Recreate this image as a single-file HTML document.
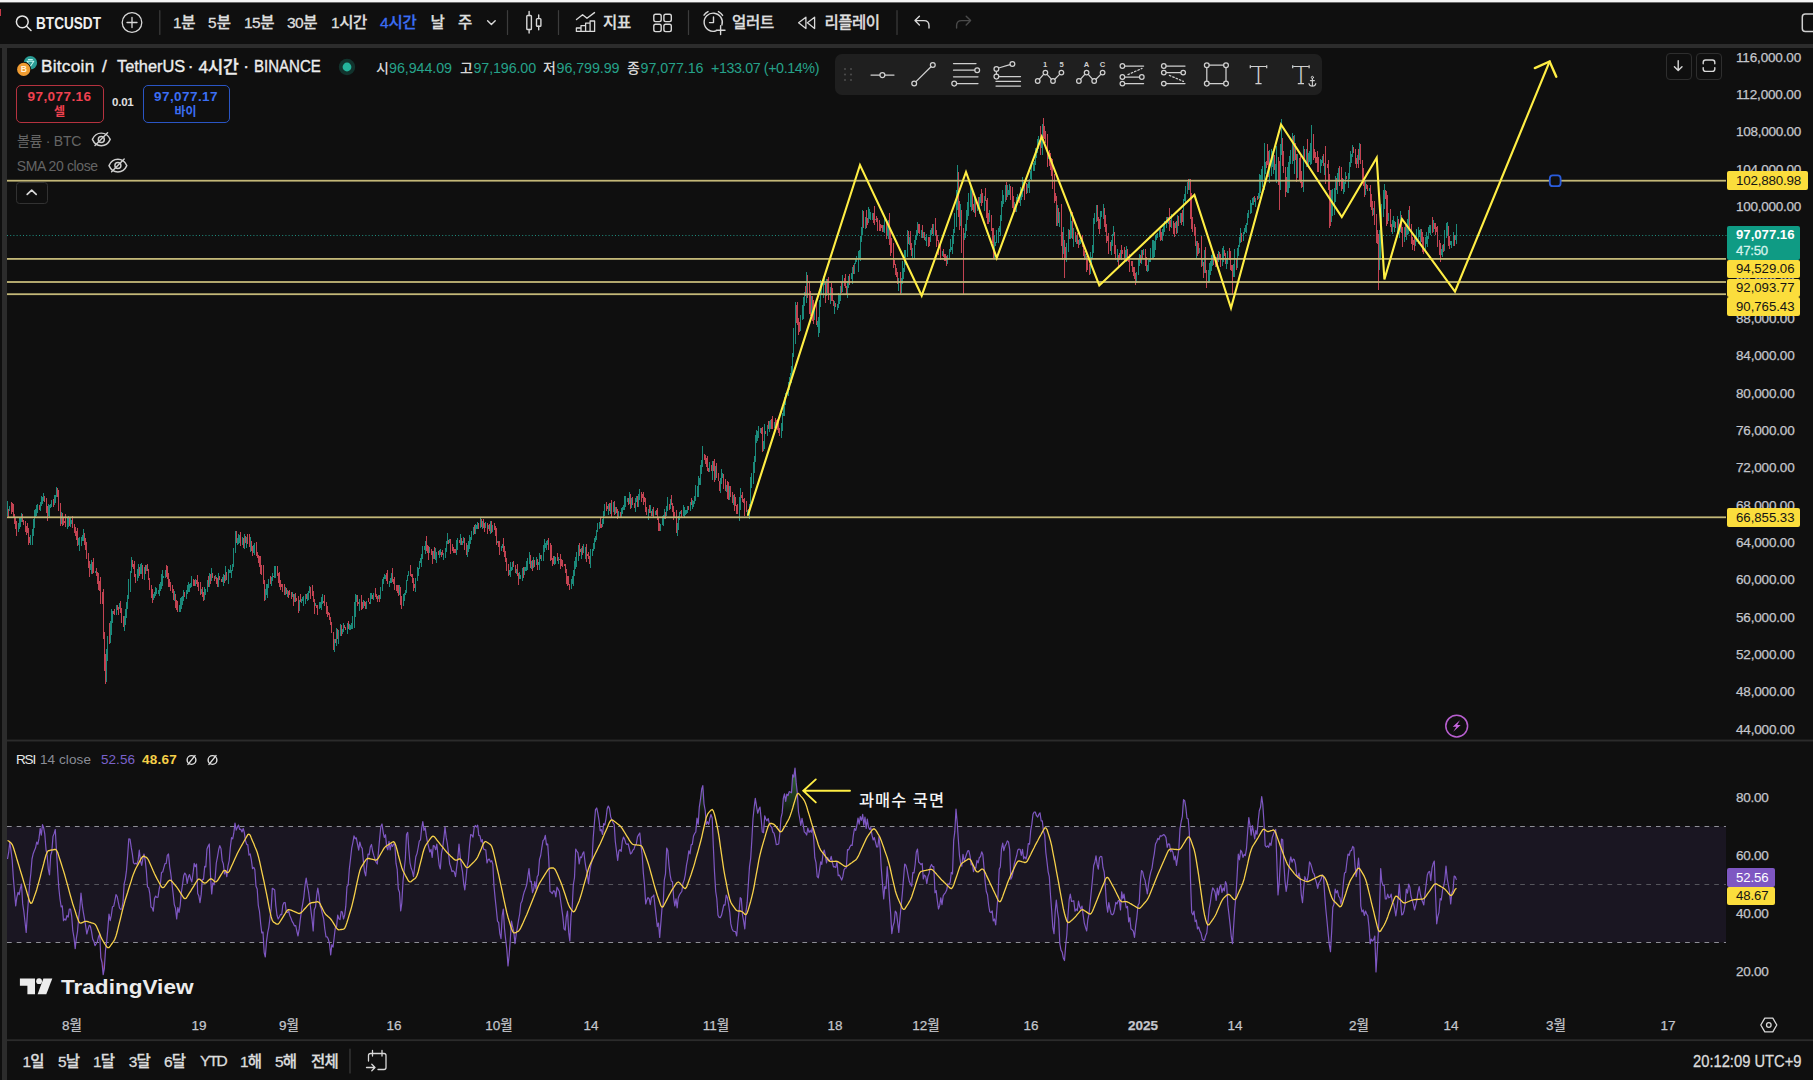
<!DOCTYPE html>
<html lang="ko"><head><meta charset="utf-8"><title>BTCUSDT 4시간 차트</title>
<style>
html,body{margin:0;padding:0;background:#0f0f0f}
body{width:1813px;height:1080px;overflow:hidden;position:relative;font-family:"Liberation Sans","Noto Sans CJK KR",sans-serif}
.t{position:absolute;white-space:nowrap;line-height:1;}
.lab{position:absolute;border-radius:2px}
.abs{position:absolute}
</style></head><body>
<div class="abs" style="left:0;top:0;width:1813px;height:2px;background:#f4f4f4"></div>
<div class="abs" style="left:0;top:2px;width:1813px;height:1px;background:#6b6b6b"></div>
<div class="abs" style="left:0;top:44px;width:1813px;height:4px;background:#2c2c2c"></div>
<div class="abs" style="left:2px;top:48px;width:5px;height:1032px;background:#2c2c2c"></div>
<div class="abs" style="left:0;top:9px;width:1px;height:7px;background:#c43a48"></div>
<div class="abs" style="left:7px;top:48px;width:1806px;height:1032px;background:#0f0f0f;border-top-left-radius:5px"></div>
<div class="abs" style="left:835px;top:53.5px;width:486.5px;height:41.5px;background:#1f1f1f;border-radius:7px"></div>
<div class="abs" style="left:15.5px;top:85px;width:86px;height:35.5px;border:1.3px solid #b5323f;border-radius:5px"></div>
<div class="abs" style="left:142.5px;top:85px;width:85px;height:35.5px;border:1.3px solid #2a55c4;border-radius:5px"></div>
<div class="abs" style="left:16.3px;top:181.9px;width:30px;height:20px;border:1.2px solid #323232;border-radius:3.5px"></div>
<div class="abs" style="left:1665.5px;top:53px;width:24.5px;height:24.5px;border:1px solid #2e2e2e;border-radius:4px"></div>
<div class="abs" style="left:1696px;top:53px;width:24px;height:24.5px;border:1px solid #2e2e2e;border-radius:4px"></div>
<svg id="chart" width="1813" height="1080" viewBox="0 0 1813 1080" style="position:absolute;left:0;top:0">
<defs><linearGradient id="obg" x1="0" y1="766" x2="0" y2="826.5" gradientUnits="userSpaceOnUse"><stop offset="0" stop-color="#4caf50" stop-opacity=".7"/><stop offset=".45" stop-color="#4caf50" stop-opacity=".28"/><stop offset=".75" stop-color="#4caf50" stop-opacity=".06"/><stop offset="1" stop-color="#4caf50" stop-opacity="0"/></linearGradient><linearGradient id="osg" x1="0" y1="942" x2="0" y2="977" gradientUnits="userSpaceOnUse"><stop offset="0" stop-color="#f23645" stop-opacity="0"/><stop offset=".55" stop-color="#f23645" stop-opacity=".12"/><stop offset=".8" stop-color="#f23645" stop-opacity=".6"/><stop offset="1" stop-color="#f23645" stop-opacity=".95"/></linearGradient></defs>
<rect x="7" y="739.6" width="1806" height="1.9" fill="#2b2b2b"/>
<rect x="7" y="1039.3" width="1806" height="1.8" fill="#2b2b2b"/>
<path d="M7 235.5H1727" stroke="#1f8f80" stroke-width="1" stroke-dasharray="1 2.2" fill="none"/>
<g fill="none" stroke-width="1" shape-rendering="crispEdges">
<path d="M7.5 500.8V515.8M9.5 506.3V511.2M18.5 522.8V531.7M19.5 517.2V528.9M20.5 518.3V527.3M21.5 512.7V522.3M30.5 534.5V545.1M32.5 529.2V544.5M33.5 519.2V535.6M34.5 510.4V527.8M35.5 508.8V516.9M36.5 505.4V515.9M37.5 503.5V513.0M40.5 501.6V511.4M41.5 496.4V506.2M42.5 496.5V504.1M43.5 492.5V500.9M48.5 504.3V516.2M49.5 505.3V517.9M50.5 504.3V508.1M51.5 499.9V507.0M54.5 495.2V505.1M55.5 494.8V502.9M56.5 487.0V497.2M61.5 511.9V524.0M67.5 517.9V529.4M68.5 515.6V526.9M70.5 517.2V527.2M71.5 519.6V523.8M78.5 537.5V544.7M79.5 537.3V550.8M81.5 537.1V546.0M82.5 535.1V541.4M83.5 529.3V540.8M90.5 563.5V570.2M91.5 560.0V573.7M95.5 570.5V572.7M106.5 649.0V682.3M107.5 635.6V661.3M110.5 621.1V643.3M111.5 608.5V635.4M112.5 610.7V622.6M116.5 604.8V614.8M119.5 603.4V609.3M124.5 615.6V631.3M125.5 608.9V625.0M126.5 601.7V617.5M127.5 595.2V608.7M128.5 578.6V599.3M130.5 570.5V591.9M131.5 557.0V572.6M137.5 569.2V581.0M138.5 563.8V578.3M140.5 564.4V574.0M141.5 563.4V573.5M144.5 566.8V580.2M146.5 565.2V571.4M153.5 593.8V600.2M154.5 592.2V597.8M155.5 586.6V596.0M156.5 587.9V594.3M158.5 590.1V594.2M159.5 583.5V595.6M160.5 582.4V591.2M161.5 573.6V588.6M162.5 569.9V585.7M163.5 576.4V578.4M165.5 569.9V577.8M174.5 591.0V600.9M179.5 604.7V611.6M180.5 598.4V611.9M181.5 596.6V608.9M182.5 596.1V605.1M183.5 589.8V600.6M186.5 589.8V599.0M187.5 585.2V593.6M188.5 582.0V592.1M189.5 583.8V591.6M190.5 582.5V588.3M191.5 576.1V587.2M195.5 579.4V586.0M201.5 589.2V593.7M204.5 586.7V600.4M205.5 588.8V595.4M207.5 579.9V592.3M209.5 572.7V586.6M211.5 568.4V580.7M215.5 575.2V579.4M218.5 572.7V586.7M222.5 577.1V582.0M223.5 574.3V586.2M225.5 566.0V581.1M228.5 568.5V583.6M229.5 570.4V573.1M230.5 564.9V572.7M231.5 570.2V578.2M232.5 563.9V571.4M233.5 547.5V566.8M235.5 531.3V553.0M237.5 538.2V544.6M238.5 534.3V543.8M239.5 535.1V542.5M242.5 537.0V545.1M244.5 533.7V549.2M246.5 536.6V548.0M250.5 537.0V551.7M253.5 544.6V552.8M254.5 542.6V554.9M265.5 588.6V599.8M266.5 583.6V595.0M267.5 584.2V597.6M268.5 579.4V587.5M271.5 577.2V586.2M272.5 572.9V580.9M274.5 565.7V577.9M275.5 565.9V578.0M285.5 587.0V595.4M287.5 590.3V596.8M292.5 592.4V597.0M294.5 593.9V601.7M299.5 599.5V610.7M301.5 599.3V602.8M302.5 596.9V601.4M303.5 596.1V606.2M305.5 593.9V604.3M307.5 592.7V600.8M308.5 590.5V600.4M309.5 585.5V593.0M315.5 603.3V606.3M319.5 601.6V609.2M320.5 602.1V607.6M321.5 596.7V609.7M322.5 594.0V604.4M334.5 638.7V652.0M336.5 627.7V646.3M338.5 630.2V643.7M340.5 624.3V636.0M342.5 629.2V634.3M343.5 622.8V631.6M347.5 622.7V633.6M349.5 624.0V630.1M350.5 624.5V629.5M351.5 622.9V629.0M352.5 616.4V629.0M354.5 602.1V627.6M355.5 594.0V616.8M356.5 594.5V602.1M359.5 599.4V611.4M363.5 599.6V607.7M366.5 600.8V609.1M370.5 593.2V603.7M371.5 592.9V599.4M373.5 593.3V599.5M378.5 594.6V598.7M380.5 586.7V599.4M382.5 578.7V590.9M383.5 577.2V583.8M384.5 573.6V578.8M385.5 575.0V578.8M389.5 580.5V586.5M390.5 577.7V582.6M391.5 572.8V582.9M399.5 585.1V595.3M403.5 593.6V606.3M404.5 593.3V601.1M405.5 589.8V595.3M406.5 579.6V592.9M407.5 575.2V580.5M408.5 570.6V575.8M415.5 577.7V592.0M417.5 566.8V581.3M418.5 568.0V575.8M419.5 560.8V568.9M420.5 558.0V562.8M421.5 554.4V566.5M422.5 545.9V558.7M424.5 545.5V550.2M425.5 541.0V553.9M429.5 546.5V553.4M433.5 550.9V558.5M435.5 547.7V560.0M436.5 552.0V562.5M439.5 549.7V557.8M440.5 549.4V555.3M443.5 552.6V559.9M445.5 547.6V558.0M446.5 541.4V551.9M447.5 533.1V544.4M449.5 539.0V543.2M456.5 540.3V554.5M457.5 537.8V550.2M460.5 534.2V544.5M462.5 540.5V544.5M463.5 537.2V542.7M467.5 545.1V557.4M468.5 541.2V551.6M469.5 534.5V548.5M470.5 537.3V543.9M471.5 531.2V539.6M473.5 526.5V535.0M475.5 523.9V534.1M476.5 524.5V529.4M477.5 522.2V529.2M480.5 517.2V528.2M482.5 520.9V528.7M485.5 522.1V528.3M488.5 525.1V529.4M490.5 521.1V533.5M492.5 524.8V531.8M497.5 540.6V543.2M501.5 546.4V551.0M502.5 543.6V548.2M509.5 570.1V574.8M510.5 562.4V576.5M511.5 567.0V571.0M512.5 561.7V570.2M516.5 568.5V574.2M519.5 571.5V579.0M520.5 574.7V579.4M522.5 568.1V580.6M524.5 566.6V574.6M525.5 567.2V571.4M526.5 560.9V571.0M527.5 557.8V570.0M529.5 551.9V564.0M531.5 560.7V569.2M533.5 556.9V568.3M536.5 556.9V565.3M538.5 561.6V565.0M539.5 552.7V570.2M541.5 555.3V561.3M543.5 545.2V560.6M544.5 538.6V552.1M545.5 542.8V548.3M546.5 541.2V550.1M547.5 539.8V544.8M554.5 555.7V564.8M555.5 557.4V564.2M558.5 556.5V564.3M571.5 579.3V589.1M572.5 575.5V584.1M573.5 569.8V585.8M574.5 560.8V575.6M575.5 556.9V569.4M576.5 552.4V566.5M578.5 545.2V561.4M581.5 547.9V559.1M583.5 543.6V553.1M585.5 547.0V559.2M590.5 548.7V567.5M592.5 548.8V556.3M593.5 543.1V551.1M594.5 538.4V548.7M595.5 536.0V542.2M596.5 529.8V540.4M597.5 522.6V531.8M599.5 521.9V528.8M602.5 518.9V526.9M603.5 511.0V523.9M604.5 504.3V515.7M608.5 503.5V515.2M610.5 502.9V513.7M613.5 501.8V512.0M615.5 507.1V514.4M618.5 511.3V517.1M621.5 507.5V516.8M622.5 507.2V514.4M623.5 505.0V509.6M624.5 496.4V510.0M625.5 496.3V506.7M627.5 497.9V501.7M629.5 492.1V504.1M631.5 497.8V507.6M635.5 498.4V511.5M636.5 495.7V502.0M638.5 493.9V507.3M639.5 489.3V500.0M648.5 509.4V520.3M650.5 504.5V513.1M652.5 508.6V515.9M655.5 511.0V515.4M660.5 524.3V531.2M662.5 516.4V524.7M663.5 515.1V525.9M664.5 508.6V519.2M666.5 505.9V515.5M667.5 497.2V510.6M670.5 498.6V508.9M677.5 522.8V536.2M678.5 515.7V530.4M679.5 511.6V519.7M680.5 510.6V513.8M683.5 505.1V516.3M684.5 507.0V517.9M685.5 509.7V515.1M686.5 509.6V514.4M687.5 506.4V512.8M690.5 502.2V510.8M692.5 499.9V509.0M693.5 500.5V506.5M694.5 495.7V503.5M695.5 485.4V500.6M697.5 485.7V497.4M698.5 475.6V496.7M699.5 477.9V485.3M700.5 465.4V485.0M701.5 460.4V473.6M702.5 446.2V467.4M709.5 462.3V471.6M712.5 461.0V479.5M715.5 466.1V479.7M720.5 478.2V492.9M721.5 468.5V484.4M722.5 473.3V477.8M726.5 484.6V492.0M729.5 485.9V499.8M733.5 494.5V505.2M739.5 496.5V520.6M740.5 488.1V510.4M747.5 509.7V514.3M749.5 503.7V518.8M750.5 477.1V505.4M751.5 472.9V487.7M753.5 461.7V484.3M754.5 456.0V472.8M755.5 435.0V461.9M756.5 430.2V443.0M757.5 430.9V441.2M758.5 426.4V437.7M760.5 427.9V433.1M763.5 441.2V450.9M764.5 423.9V448.8M767.5 425.3V435.9M769.5 420.7V432.0M770.5 420.0V428.5M774.5 422.3V428.4M781.5 422.5V437.7M782.5 412.6V431.1M783.5 407.0V416.3M784.5 397.1V416.2M785.5 392.6V404.9M786.5 391.5V394.1M788.5 382.1V396.1M789.5 377.0V389.6M790.5 373.4V382.1M791.5 366.2V383.0M792.5 353.1V374.2M793.5 328.4V356.7M795.5 302.1V343.9M800.5 314.7V331.4M802.5 304.6V319.7M803.5 296.6V318.5M804.5 292.0V306.3M806.5 272.0V303.0M811.5 295.8V316.7M814.5 309.3V320.1M817.5 320.6V327.2M818.5 316.5V337.1M819.5 299.5V333.0M820.5 279.5V306.9M821.5 286.0V295.0M823.5 275.5V297.6M824.5 273.5V285.4M826.5 279.2V295.7M830.5 287.2V304.0M834.5 300.9V313.9M837.5 304.2V309.8M838.5 293.2V307.5M839.5 294.1V304.3M840.5 285.9V301.3M842.5 275.2V291.7M847.5 280.5V297.6M848.5 275.7V288.1M851.5 273.4V279.0M852.5 267.4V283.7M854.5 262.6V273.5M855.5 258.0V264.2M856.5 255.5V262.0M858.5 251.4V271.5M859.5 250.4V259.3M860.5 236.2V260.8M861.5 226.5V242.4M862.5 210.0V234.7M865.5 216.8V228.5M868.5 206.9V222.6M869.5 209.1V218.5M870.5 211.6V220.3M872.5 213.3V219.6M875.5 218.7V220.4M883.5 224.5V231.9M884.5 217.9V233.0M887.5 221.6V234.6M888.5 220.1V239.3M898.5 277.5V291.1M901.5 278.1V292.8M902.5 261.0V283.7M903.5 268.0V278.8M904.5 249.7V271.5M905.5 249.9V264.5M907.5 230.1V257.4M909.5 237.2V244.6M912.5 248.2V258.6M914.5 240.2V259.2M915.5 234.8V245.1M916.5 230.4V240.1M917.5 222.3V236.4M921.5 230.3V238.2M923.5 232.1V238.0M925.5 236.9V241.4M926.5 233.5V245.8M930.5 230.2V242.4M931.5 228.0V235.0M933.5 224.0V235.7M939.5 246.3V248.2M942.5 250.7V255.9M947.5 255.2V263.8M949.5 248.7V257.9M950.5 239.1V251.9M951.5 246.5V250.0M952.5 235.2V253.5M953.5 228.8V243.9M954.5 212.8V232.8M956.5 190.4V226.6M957.5 164.6V209.7M960.5 204.1V226.2M964.5 233.0V239.5M965.5 224.4V237.6M966.5 210.1V231.3M967.5 202.3V219.6M968.5 193.2V215.9M970.5 184.8V207.4M971.5 187.9V210.6M974.5 194.8V212.9M977.5 202.8V210.8M979.5 197.2V213.6M980.5 194.4V203.2M984.5 196.1V211.2M989.5 210.3V221.9M994.5 234.9V257.9M995.5 242.1V246.0M996.5 230.0V242.8M998.5 228.1V242.8M999.5 225.7V231.6M1000.5 215.1V236.2M1001.5 200.9V220.5M1002.5 190.4V207.2M1003.5 194.9V203.8M1005.5 185.0V202.4M1007.5 184.6V197.2M1008.5 190.4V195.1M1009.5 183.8V194.6M1014.5 202.4V212.1M1016.5 197.2V211.5M1017.5 194.3V199.4M1020.5 187.1V206.4M1021.5 189.6V199.5M1022.5 177.4V197.2M1023.5 181.8V191.4M1027.5 184.3V192.8M1028.5 182.4V188.1M1029.5 178.5V193.2M1030.5 171.0V178.8M1031.5 162.7V181.2M1033.5 162.8V170.7M1034.5 161.3V170.5M1035.5 148.4V165.2M1036.5 148.5V157.6M1037.5 138.7V153.4M1038.5 135.8V148.6M1041.5 139.6V148.2M1042.5 124.2V155.3M1048.5 154.1V159.2M1057.5 205.3V226.3M1059.5 211.5V227.1M1063.5 227.2V254.3M1066.5 242.7V261.7M1068.5 229.3V252.0M1070.5 213.3V238.8M1071.5 220.9V237.7M1073.5 227.8V246.5M1076.5 234.8V243.6M1079.5 238.7V245.0M1080.5 240.4V244.1M1085.5 254.3V259.1M1090.5 252.2V273.7M1091.5 256.7V263.5M1092.5 245.1V258.8M1093.5 217.8V253.2M1094.5 212.5V223.8M1096.5 204.9V221.8M1100.5 211.0V229.1M1101.5 211.4V216.7M1103.5 204.0V219.2M1111.5 239.8V255.1M1112.5 233.6V246.0M1113.5 225.9V235.5M1117.5 248.7V261.9M1120.5 250.4V258.4M1125.5 249.7V259.2M1126.5 245.5V261.6M1136.5 271.6V283.2M1138.5 258.4V275.3M1139.5 253.6V265.6M1141.5 249.8V264.4M1143.5 249.3V254.5M1147.5 265.2V272.2M1148.5 259.9V270.7M1149.5 258.0V262.3M1150.5 247.9V261.8M1152.5 240.2V259.0M1153.5 240.2V258.1M1154.5 241.1V256.5M1155.5 235.0V249.5M1156.5 234.3V239.6M1157.5 233.2V237.5M1159.5 229.5V237.1M1162.5 229.3V241.1M1163.5 223.6V236.0M1164.5 221.1V232.0M1166.5 216.7V227.6M1168.5 217.3V223.9M1171.5 213.7V227.6M1175.5 222.1V228.0M1177.5 214.9V233.0M1180.5 212.7V223.4M1183.5 198.6V226.4M1184.5 193.9V200.6M1185.5 186.0V203.8M1187.5 182.3V193.5M1189.5 179.0V190.4M1196.5 241.3V257.8M1199.5 248.0V252.5M1202.5 259.0V265.5M1204.5 249.8V273.1M1208.5 270.4V283.1M1209.5 263.0V282.4M1210.5 260.8V275.1M1211.5 255.4V270.9M1212.5 252.9V265.7M1216.5 257.2V266.8M1218.5 251.2V262.0M1222.5 247.5V266.3M1223.5 245.5V261.7M1226.5 257.8V268.7M1227.5 251.3V263.8M1233.5 264.4V276.6M1234.5 248.7V277.0M1237.5 248.1V268.4M1238.5 245.4V256.3M1239.5 236.9V247.2M1240.5 227.9V242.5M1243.5 231.7V241.0M1244.5 227.7V234.3M1245.5 224.5V231.5M1246.5 222.5V233.4M1247.5 212.7V224.7M1248.5 210.2V218.0M1250.5 199.6V213.5M1251.5 203.4V212.5M1252.5 197.5V205.4M1253.5 196.5V205.0M1255.5 197.8V206.5M1258.5 193.3V199.1M1259.5 173.8V198.1M1260.5 175.0V192.9M1261.5 168.9V182.4M1262.5 166.1V186.6M1264.5 142.8V190.2M1265.5 161.9V174.1M1269.5 150.1V182.8M1271.5 148.8V176.4M1272.5 151.1V166.6M1273.5 153.8V174.1M1275.5 164.0V180.5M1276.5 145.9V182.9M1280.5 143.8V189.6M1281.5 119.0V155.2M1287.5 167.0V192.5M1288.5 161.6V192.9M1289.5 155.9V187.9M1290.5 149.7V164.0M1292.5 132.6V164.1M1294.5 135.4V174.4M1297.5 154.2V178.2M1303.5 146.0V191.5M1306.5 148.6V167.4M1308.5 153.4V168.0M1309.5 151.1V162.2M1310.5 142.5V164.7M1311.5 124.5V163.5M1320.5 158.9V172.6M1321.5 159.9V166.1M1322.5 156.0V163.1M1324.5 163.3V175.0M1331.5 190.4V221.9M1332.5 188.7V215.6M1334.5 187.6V214.5M1335.5 175.8V201.7M1337.5 173.0V194.4M1338.5 168.2V181.8M1343.5 179.0V194.1M1344.5 181.5V191.6M1345.5 172.4V184.3M1348.5 172.7V188.4M1349.5 162.2V179.4M1350.5 151.2V166.8M1351.5 153.6V163.4M1352.5 145.2V157.0M1357.5 155.3V163.5M1359.5 142.7V160.4M1365.5 181.3V194.8M1369.5 187.9V191.4M1373.5 207.8V214.8M1379.5 229.8V269.7M1380.5 224.6V260.3M1381.5 203.7V232.6M1383.5 190.1V217.2M1384.5 183.7V209.0M1388.5 213.1V221.0M1392.5 220.2V233.9M1393.5 215.8V226.5M1394.5 220.5V231.5M1397.5 216.1V235.4M1399.5 224.3V238.4M1400.5 210.9V232.4M1404.5 226.5V242.0M1406.5 224.6V239.8M1407.5 218.9V235.2M1408.5 210.0V234.0M1415.5 235.9V246.4M1416.5 229.3V242.0M1418.5 226.8V243.5M1419.5 230.0V236.5M1420.5 229.4V245.0M1425.5 237.4V250.6M1426.5 232.4V243.5M1427.5 236.3V246.8M1428.5 227.2V238.7M1429.5 225.3V233.4M1430.5 224.6V235.1M1433.5 219.8V231.6M1441.5 248.9V255.3M1442.5 245.2V257.0M1444.5 229.8V250.5M1446.5 223.4V238.1M1447.5 222.0V234.7M1450.5 240.9V244.5M1451.5 240.8V247.6M1453.5 231.5V246.1M1455.5 234.6V240.4M1456.5 224.3V244.4" stroke="#1b8a7b"/>
<path d="M8.5 508.9V516.6M11.5 502.4V513.8M12.5 503.1V512.4M13.5 503.6V517.2M14.5 513.8V524.0M15.5 518.0V529.2M16.5 521.1V535.6M22.5 513.9V521.6M23.5 520.3V525.2M25.5 521.3V532.3M26.5 525.7V534.6M27.5 522.8V533.0M28.5 528.1V544.7M29.5 536.9V543.1M39.5 504.7V510.4M44.5 495.8V501.8M46.5 498.2V513.4M47.5 505.8V521.1M53.5 498.7V506.5M57.5 487.7V496.5M58.5 490.0V510.7M60.5 502.9V525.9M62.5 513.3V526.2M63.5 517.1V524.5M64.5 520.5V523.4M65.5 513.9V526.7M69.5 517.0V525.9M72.5 515.8V528.2M74.5 523.9V532.9M75.5 527.0V536.4M76.5 530.6V539.9M77.5 527.8V546.4M84.5 533.4V545.3M85.5 538.0V550.0M86.5 542.3V559.3M88.5 553.3V567.7M89.5 561.3V576.5M92.5 561.6V573.6M93.5 558.2V572.9M96.5 567.7V576.2M97.5 571.8V583.5M98.5 572.6V589.8M99.5 581.4V590.8M100.5 576.6V603.6M102.5 591.6V604.0M103.5 588.6V639.1M104.5 632.1V671.1M105.5 653.5V684.0M109.5 622.9V643.9M113.5 610.7V613.7M114.5 608.9V614.5M117.5 605.1V610.4M118.5 607.2V614.7M120.5 600.8V613.4M121.5 608.0V622.8M123.5 615.8V626.6M132.5 560.0V566.8M133.5 563.8V568.6M134.5 561.2V576.6M135.5 573.5V582.6M139.5 566.6V576.2M142.5 565.0V579.1M145.5 565.0V574.1M147.5 564.1V570.7M148.5 569.3V580.2M149.5 577.6V589.7M151.5 584.9V598.3M152.5 589.2V602.6M166.5 565.3V576.8M167.5 566.3V579.3M168.5 573.1V587.0M169.5 579.4V586.5M170.5 581.6V591.3M172.5 584.8V593.3M173.5 589.1V599.7M175.5 594.3V607.9M176.5 600.0V610.0M177.5 600.8V611.7M184.5 592.0V596.9M193.5 578.5V586.0M194.5 580.2V585.7M196.5 580.2V583.5M197.5 574.6V587.4M198.5 582.3V591.2M200.5 582.3V595.2M202.5 586.6V597.3M203.5 592.0V601.3M208.5 575.8V586.5M210.5 574.4V584.0M212.5 572.8V578.2M214.5 575.8V580.6M216.5 576.8V584.3M217.5 578.3V587.3M219.5 575.5V580.3M221.5 579.2V582.3M224.5 574.7V582.6M226.5 571.7V580.0M236.5 530.5V542.5M240.5 531.8V546.0M243.5 538.3V547.9M245.5 536.0V543.0M247.5 534.0V543.5M249.5 534.2V547.0M251.5 540.6V550.5M252.5 545.7V556.0M256.5 541.8V555.6M257.5 551.5V558.4M258.5 555.3V562.5M259.5 555.5V566.5M260.5 555.8V573.8M261.5 564.8V575.0M263.5 564.9V583.6M264.5 579.5V600.5M270.5 575.6V584.2M273.5 575.9V577.0M277.5 566.3V576.2M278.5 573.1V583.2M279.5 572.1V586.6M280.5 580.1V589.9M281.5 584.2V586.9M282.5 583.7V592.1M284.5 584.3V594.8M286.5 588.1V593.8M288.5 591.1V597.5M289.5 590.0V594.9M291.5 592.3V599.1M293.5 594.3V606.4M295.5 593.1V602.1M296.5 598.3V600.7M298.5 596.1V612.7M300.5 594.1V602.1M306.5 594.3V598.9M310.5 587.2V598.5M312.5 585.2V596.4M313.5 591.3V601.8M314.5 599.0V613.6M316.5 604.7V608.1M317.5 604.5V615.2M323.5 600.8V602.6M324.5 594.8V606.0M326.5 601.8V614.2M327.5 605.6V617.0M328.5 612.4V615.0M329.5 613.1V619.6M330.5 617.1V624.5M331.5 622.4V633.2M333.5 632.4V650.0M335.5 639.2V642.8M337.5 629.3V639.3M341.5 624.8V635.6M344.5 625.1V628.2M345.5 626.7V630.1M348.5 621.4V628.8M357.5 595.1V605.7M358.5 602.3V604.1M361.5 594.5V609.7M362.5 602.1V609.2M364.5 600.6V606.0M365.5 602.4V608.6M368.5 597.7V602.0M369.5 601.6V604.4M372.5 595.2V598.6M375.5 588.4V596.6M376.5 593.6V598.5M377.5 596.3V601.8M379.5 594.9V602.0M386.5 573.0V580.8M387.5 570.2V583.5M392.5 568.3V582.2M393.5 578.9V584.3M394.5 577.0V589.7M396.5 585.0V590.5M397.5 584.7V593.0M398.5 584.5V595.8M400.5 586.6V604.6M401.5 595.8V609.1M410.5 565.1V575.7M411.5 573.7V576.9M412.5 573.7V583.4M413.5 577.7V590.6M414.5 584.4V588.3M426.5 535.5V550.6M427.5 544.8V552.8M428.5 546.2V560.2M431.5 548.7V555.0M432.5 551.2V563.5M434.5 547.4V558.6M438.5 551.1V555.3M441.5 551.8V556.5M442.5 550.4V555.3M448.5 540.1V543.8M450.5 538.6V553.9M452.5 543.7V550.9M453.5 546.7V553.4M454.5 548.7V552.8M455.5 548.8V552.6M459.5 540.1V542.8M461.5 538.1V544.9M464.5 538.2V550.0M466.5 543.2V555.1M474.5 524.6V534.3M478.5 522.9V528.9M481.5 518.6V526.5M483.5 519.0V527.9M484.5 522.7V532.2M487.5 522.7V533.8M489.5 523.8V531.3M491.5 520.7V533.4M494.5 522.6V530.3M495.5 525.5V535.9M496.5 528.4V544.8M498.5 541.4V546.6M499.5 540.9V555.2M503.5 537.6V551.8M504.5 546.4V556.8M505.5 551.4V561.5M506.5 557.8V571.2M508.5 564.2V575.6M513.5 560.7V567.1M515.5 564.9V573.2M517.5 564.0V576.3M518.5 573.1V585.3M523.5 566.7V577.7M530.5 555.3V568.2M532.5 560.0V571.1M534.5 559.5V566.8M537.5 558.8V570.4M540.5 554.7V558.5M548.5 537.8V550.2M550.5 542.6V560.7M551.5 545.3V559.9M552.5 558.3V565.5M553.5 556.1V563.6M557.5 553.1V560.6M559.5 558.7V559.7M560.5 553.6V569.1M561.5 558.7V565.5M562.5 560.1V567.3M564.5 564.1V566.2M565.5 564.2V572.5M566.5 569.2V583.7M567.5 575.6V585.5M568.5 575.7V584.5M569.5 583.8V590.0M579.5 543.0V555.7M580.5 548.6V552.1M582.5 545.8V555.1M586.5 544.1V561.7M587.5 553.5V555.6M588.5 551.6V559.1M589.5 555.8V563.5M600.5 517.5V527.8M601.5 523.6V528.0M606.5 502.2V510.6M607.5 506.1V509.0M609.5 502.6V510.5M611.5 500.0V516.8M614.5 500.8V515.2M616.5 506.6V512.6M617.5 508.7V519.4M620.5 512.2V517.6M628.5 498.3V505.1M630.5 493.9V508.6M632.5 497.4V504.8M634.5 502.9V508.0M637.5 496.2V507.2M641.5 492.4V501.8M642.5 494.4V497.7M643.5 492.4V505.1M644.5 496.7V502.0M645.5 498.1V511.9M646.5 506.6V515.3M649.5 505.3V512.6M651.5 510.6V516.1M653.5 507.2V517.2M656.5 509.9V515.2M657.5 507.9V520.3M658.5 516.6V531.1M659.5 523.0V531.0M665.5 512.1V518.8M669.5 503.7V510.1M671.5 494.7V504.6M672.5 502.5V511.7M673.5 506.2V520.4M674.5 512.1V518.3M676.5 510.1V533.3M681.5 510.3V518.1M688.5 506.4V510.0M691.5 498.4V504.8M704.5 453.6V460.0M705.5 454.7V463.9M706.5 458.1V466.9M707.5 455.9V471.1M708.5 467.7V472.2M711.5 465.4V471.0M713.5 460.9V470.9M714.5 458.8V481.8M716.5 463.0V478.0M718.5 473.3V481.4M719.5 480.6V490.9M723.5 473.7V489.4M725.5 478.5V491.4M727.5 481.4V499.1M728.5 482.0V500.1M730.5 486.3V496.8M732.5 492.2V502.7M734.5 493.7V510.9M735.5 496.6V506.4M736.5 504.8V514.2M737.5 504.3V513.5M741.5 495.2V498.4M742.5 492.1V502.3M743.5 499.3V502.5M744.5 498.4V516.4M746.5 500.8V512.4M748.5 509.2V513.2M761.5 428.2V433.5M762.5 427.0V451.8M765.5 431.2V433.8M768.5 421.3V428.8M771.5 418.5V428.5M772.5 415.8V429.1M775.5 418.4V428.6M776.5 419.7V427.5M777.5 419.3V429.6M778.5 422.2V433.4M779.5 427.6V435.5M796.5 305.4V323.2M797.5 301.6V324.9M798.5 317.9V334.9M799.5 322.1V331.6M805.5 286.2V296.3M807.5 275.4V297.5M809.5 282.2V314.0M810.5 291.0V315.8M812.5 295.9V320.6M813.5 300.2V324.2M816.5 298.5V324.7M825.5 281.9V303.1M827.5 279.1V292.9M828.5 277.4V300.1M831.5 283.1V301.4M832.5 287.6V301.1M833.5 300.0V305.6M835.5 303.2V306.5M841.5 282.3V292.5M844.5 278.0V286.2M845.5 274.1V288.0M846.5 286.0V293.5M849.5 274.0V285.1M853.5 264.6V274.3M863.5 211.0V228.3M866.5 209.9V228.4M867.5 218.2V225.1M873.5 213.2V223.1M874.5 205.8V225.2M876.5 215.5V221.6M877.5 217.7V231.3M879.5 220.4V231.2M880.5 224.2V230.6M881.5 224.8V227.8M882.5 225.2V232.4M886.5 222.0V238.7M889.5 212.6V245.2M890.5 229.0V256.2M891.5 238.4V253.4M893.5 243.3V267.7M894.5 260.3V265.0M895.5 263.5V275.3M896.5 268.2V277.4M897.5 271.8V284.3M900.5 272.3V293.7M908.5 230.9V243.8M910.5 231.3V250.2M911.5 242.9V255.7M918.5 224.4V232.5M919.5 223.6V233.7M922.5 225.0V237.5M924.5 231.7V239.6M928.5 236.8V247.1M929.5 237.4V245.9M932.5 223.5V234.4M935.5 218.0V235.3M936.5 230.1V247.2M937.5 235.1V240.5M938.5 239.5V254.9M940.5 242.7V259.5M943.5 248.8V257.0M944.5 253.9V261.4M945.5 253.7V260.5M946.5 256.4V266.4M958.5 172.2V216.7M959.5 201.0V229.8M961.5 209.8V253.2M963.5 227.7V294.0M972.5 189.9V209.5M973.5 203.7V212.0M975.5 199.9V217.0M978.5 197.1V208.8M981.5 189.1V206.1M982.5 193.4V202.9M985.5 188.2V201.0M986.5 199.6V217.8M987.5 198.3V223.6M988.5 212.5V224.2M991.5 215.4V230.8M992.5 227.9V243.4M993.5 227.7V258.8M1006.5 182.0V199.7M1010.5 186.3V199.9M1012.5 186.5V208.0M1013.5 196.1V212.4M1015.5 203.7V211.9M1019.5 197.4V203.0M1024.5 185.0V199.8M1026.5 182.6V194.3M1040.5 125.5V155.4M1043.5 117.8V137.5M1044.5 125.5V139.3M1045.5 131.3V143.4M1047.5 134.0V166.7M1049.5 149.7V166.3M1050.5 152.5V169.9M1051.5 157.5V175.8M1052.5 158.6V188.7M1054.5 174.3V202.6M1055.5 192.5V200.8M1056.5 195.8V225.5M1058.5 208.1V222.5M1061.5 204.1V245.5M1062.5 232.0V260.4M1064.5 239.8V278.0M1065.5 247.4V260.0M1069.5 229.8V238.7M1072.5 211.6V239.3M1075.5 231.8V241.6M1077.5 233.3V244.2M1078.5 240.0V247.5M1082.5 234.7V247.0M1083.5 242.9V256.2M1084.5 251.4V259.7M1086.5 255.8V272.3M1087.5 258.2V270.1M1089.5 263.5V274.5M1097.5 204.9V221.2M1098.5 216.7V228.9M1099.5 219.4V233.5M1104.5 208.1V227.0M1105.5 214.8V231.6M1106.5 223.6V243.0M1107.5 236.1V240.7M1108.5 233.4V254.4M1110.5 242.4V251.1M1114.5 232.4V253.6M1115.5 245.1V260.3M1118.5 254.9V266.0M1119.5 253.4V260.0M1121.5 245.1V259.6M1122.5 249.8V254.0M1124.5 247.0V260.7M1127.5 248.7V260.7M1128.5 256.7V262.1M1129.5 253.8V272.1M1131.5 261.4V265.6M1132.5 261.2V271.6M1133.5 266.6V275.6M1134.5 266.7V278.5M1135.5 272.9V285.0M1140.5 255.0V263.4M1142.5 249.7V257.7M1145.5 248.5V265.5M1146.5 256.8V271.4M1160.5 229.2V240.8M1161.5 231.8V239.5M1167.5 217.4V223.0M1169.5 208.3V230.5M1170.5 220.1V227.0M1173.5 221.3V233.6M1174.5 223.3V236.5M1176.5 221.1V234.2M1178.5 216.0V225.7M1181.5 212.6V224.8M1182.5 209.9V222.0M1188.5 179.2V190.2M1190.5 178.9V218.5M1191.5 192.7V228.5M1192.5 217.0V231.6M1194.5 223.5V235.8M1195.5 227.4V246.4M1197.5 241.3V255.7M1198.5 243.3V253.8M1201.5 235.9V266.7M1203.5 262.3V277.7M1205.5 246.5V273.3M1206.5 270.2V288.0M1213.5 250.9V264.6M1215.5 256.8V266.7M1217.5 254.3V263.5M1219.5 252.2V258.2M1220.5 254.0V267.3M1224.5 249.8V256.0M1225.5 252.9V264.2M1229.5 247.6V259.8M1230.5 251.3V270.3M1231.5 265.3V271.1M1232.5 264.6V294.0M1236.5 258.6V269.5M1241.5 233.1V241.8M1254.5 195.5V202.2M1257.5 196.2V200.4M1266.5 160.7V167.9M1267.5 144.2V164.8M1268.5 150.7V177.3M1274.5 155.4V169.6M1278.5 156.5V185.1M1279.5 160.8V210.0M1282.5 137.9V165.8M1283.5 151.1V172.9M1285.5 166.7V197.4M1286.5 176.9V192.0M1293.5 136.1V161.3M1295.5 143.2V160.1M1296.5 154.3V181.9M1299.5 158.3V179.8M1300.5 155.7V183.1M1301.5 171.4V187.5M1302.5 182.3V186.8M1304.5 148.8V159.3M1307.5 139.3V167.3M1313.5 134.2V160.4M1314.5 148.5V157.7M1315.5 152.3V162.8M1316.5 156.8V162.8M1317.5 150.6V172.2M1318.5 156.7V171.5M1323.5 153.5V165.5M1325.5 145.7V183.5M1327.5 163.6V168.4M1328.5 160.1V189.9M1329.5 174.2V228.0M1330.5 189.6V226.1M1336.5 177.6V190.0M1339.5 166.0V186.3M1341.5 166.5V190.8M1342.5 178.1V188.6M1346.5 176.4V179.3M1353.5 147.3V153.1M1355.5 148.5V164.2M1356.5 157.5V168.3M1358.5 148.9V168.2M1360.5 144.1V163.9M1362.5 160.3V180.7M1363.5 167.6V186.0M1364.5 180.1V196.5M1366.5 184.0V188.5M1367.5 185.1V190.5M1370.5 184.7V207.2M1371.5 194.0V210.4M1372.5 200.8V216.4M1374.5 200.5V224.5M1376.5 213.7V243.2M1377.5 229.7V243.6M1378.5 234.4V290.0M1385.5 189.5V199.2M1386.5 191.2V225.9M1387.5 194.7V223.8M1390.5 209.1V226.7M1391.5 223.5V232.3M1395.5 221.6V227.6M1398.5 219.0V233.5M1401.5 215.3V233.2M1402.5 227.3V247.1M1405.5 225.3V237.3M1409.5 206.0V230.9M1411.5 224.3V244.0M1412.5 237.0V250.0M1413.5 239.8V244.6M1414.5 235.4V250.5M1421.5 228.9V242.3M1422.5 232.4V251.6M1423.5 237.0V253.9M1432.5 216.5V232.6M1434.5 222.5V229.4M1435.5 223.0V234.8M1436.5 227.3V231.5M1437.5 225.7V246.7M1439.5 239.5V254.8M1440.5 243.0V261.8M1443.5 244.1V251.9M1448.5 225.6V246.1M1449.5 235.6V248.8M1454.5 234.9V245.7" stroke="#c24352"/>
</g>
<rect x="7" y="179.8" width="1719" height="1.8" fill="#c4b878"/>
<rect x="7" y="258.0" width="1719" height="1.8" fill="#c4b878"/>
<rect x="7" y="281.1" width="1719" height="1.8" fill="#c4b878"/>
<rect x="7" y="293.3" width="1719" height="1.8" fill="#c4b878"/>
<rect x="7" y="516.4" width="1719" height="1.8" fill="#c4b878"/>
<polyline points="748.0,515.0 860.0,165.0 921.7,295.7 966.0,172.0 996.7,258.0 1041.7,136.7 1099.3,285.5 1194.4,195.0 1231.0,308.0 1281.0,124.5 1341.8,217.0 1376.7,157.8 1384.4,279.5 1402.0,219.0 1455.0,291.5 1549.6,61.5" fill="none" stroke="#ffee44" stroke-width="2.1" stroke-linejoin="miter" stroke-linecap="round"/>
<path d="M1534.8 68.1L1549.6 61.5L1556.3 76.7" fill="none" stroke="#ffee44" stroke-width="2.4" stroke-linecap="round" stroke-linejoin="miter"/>
<rect x="1549.8" y="175.4" width="10.8" height="10.8" rx="3" fill="#0f0f0f" stroke="#2a5cdc" stroke-width="1.8"/>
<g transform="translate(1456.7 726.1)"><circle r="10.9" fill="none" stroke="#b85fd0" stroke-width="1.5"/><path d="M3.2 -5.9L-4 0.7H-0.3L-3.5 5.7L4 -1.1H0.5Z" fill="#c866e0"/></g>
<rect x="7" y="826.5" width="1719" height="116" fill="#7e57c2" opacity=".105"/>
<path d="M7 826.5H1726" stroke="#8e8e96" stroke-width="1.1" stroke-dasharray="4.7 5" fill="none"/>
<path d="M7 884.5H1726" stroke="#55555c" stroke-width="1.1" stroke-dasharray="4.7 5" fill="none"/>
<path d="M7 942.5H1726" stroke="#8e8e96" stroke-width="1.1" stroke-dasharray="4.7 5" fill="none"/>
<path d="M594.3 826.5L594.3 824.3L595.5 809.6L596.7 808.0L597.8 812.8L599.0 820.1L599.0 826.5ZM603.7 826.5L603.7 823.5L604.8 825.0L606.0 818.8L607.2 808.8L608.3 806.0L609.5 808.5L610.7 816.9L611.8 819.8L613.0 822.6L614.2 824.5L614.2 826.5ZM697.0 826.5L697.0 818.1L698.2 824.4L699.3 807.1L700.5 799.2L701.7 789.0L702.8 785.6L704.0 803.8L705.2 810.5L706.3 824.5L707.5 821.7L708.7 824.4L709.8 818.6L711.0 814.5L712.2 818.0L712.2 826.5ZM753.0 826.5L753.0 818.5L754.2 807.0L755.3 798.3L756.5 806.1L757.7 813.2L758.8 809.6L760.0 807.1L761.2 819.4L761.2 826.5ZM764.7 826.5L764.7 815.8L765.8 819.0L767.0 820.8L768.2 818.5L769.3 823.3L770.5 826.3L770.5 826.5ZM781.0 826.5L781.0 818.2L782.2 812.9L783.3 798.5L784.5 793.9L785.7 801.3L786.8 794.1L788.0 795.5L789.2 791.6L790.3 792.0L791.5 792.7L792.7 774.8L793.8 777.1L795.0 768.0L796.2 782.9L797.3 792.7L798.5 812.0L799.7 818.3L800.8 825.5L802.0 818.3L803.2 824.9L803.2 826.5ZM856.8 826.5L856.8 826.0L858.0 818.1L859.2 824.1L860.3 816.6L861.5 820.3L862.7 814.4L863.8 825.2L865.0 817.2L865.0 826.5ZM956.0 826.5L956.0 809.0L957.2 822.6L957.2 826.5ZM1031.8 826.5L1031.8 824.4L1033.0 814.3L1034.2 812.0L1035.3 812.0L1036.5 815.7L1037.7 817.1L1038.8 814.4L1040.0 812.8L1041.2 821.0L1042.3 820.8L1042.3 826.5ZM1181.2 826.5L1181.2 821.5L1182.3 816.7L1183.5 799.7L1184.7 800.7L1185.8 807.0L1187.0 818.3L1188.2 819.1L1188.2 826.5ZM1248.8 826.5L1248.8 817.6L1250.0 825.5L1250.0 826.5ZM1258.2 826.5L1258.2 821.1L1259.3 810.7L1260.5 807.2L1261.7 796.5L1262.8 804.7L1264.0 822.2L1264.0 826.5Z" fill="url(#obg)"/>
<path d="M95.0 942.4L95.0 945.6L96.2 943.7L96.2 942.4ZM100.8 942.4L100.8 957.6L102.0 962.5L103.2 974.7L104.3 968.7L105.5 950.3L105.5 942.4ZM264.2 942.4L264.2 952.6L265.3 957.0L265.3 942.4ZM329.5 942.4L329.5 943.7L330.7 955.0L331.8 944.7L333.0 947.1L333.0 942.4ZM506.8 942.4L506.8 949.3L508.0 966.0L509.2 954.7L509.2 942.4ZM1059.8 942.4L1059.8 943.7L1061.0 950.1L1062.2 952.2L1063.3 958.1L1064.5 960.5L1065.7 945.2L1065.7 942.4ZM1329.3 942.4L1329.3 944.7L1330.5 951.6L1330.5 942.4ZM1376.0 942.4L1376.0 972.0L1377.2 952.1L1377.2 942.4Z" fill="url(#osg)"/>
<path d="M7.5 859.0L8.7 852.2L9.8 842.0L11.0 850.7L12.2 860.1L13.3 877.3L14.5 891.8L15.7 906.0L16.8 897.7L18.0 892.3L19.2 894.7L20.3 888.7L21.5 884.0L22.7 903.9L23.8 911.1L25.0 921.8L26.2 932.5L27.3 915.1L28.5 898.9L29.7 883.3L30.8 873.7L32.0 859.0L33.2 853.7L34.3 850.8L35.5 848.1L36.7 842.0L37.8 844.3L39.0 838.4L40.2 828.3L41.3 835.2L42.5 824.6L43.7 828.0L44.8 834.2L46.0 849.3L47.2 855.9L48.3 869.0L49.5 875.0L50.7 855.2L51.8 851.7L53.0 836.4L54.2 833.4L55.3 829.5L56.5 851.8L57.7 871.2L58.8 887.8L60.0 899.0L61.2 906.9L62.3 906.0L63.5 920.6L64.7 919.0L65.8 920.1L67.0 915.5L68.2 917.1L69.3 909.1L70.5 909.0L71.7 916.2L72.8 930.7L74.0 937.5L75.2 948.6L76.3 938.6L77.5 931.5L78.7 917.4L79.8 908.9L81.0 893.0L82.2 904.7L83.3 912.1L84.5 918.8L85.7 926.1L86.8 934.0L88.0 929.5L89.2 925.3L90.3 926.0L91.5 931.4L92.7 939.1L93.8 941.2L95.0 945.6L96.2 943.7L97.3 941.8L98.5 936.8L99.7 934.0L100.8 957.6L102.0 962.5L103.2 974.7L104.3 968.7L105.5 950.3L106.7 941.3L107.8 929.1L109.0 914.0L110.2 920.6L111.3 915.4L112.5 906.7L113.7 906.3L114.8 901.2L116.0 894.7L117.2 896.5L118.3 902.1L119.5 907.9L120.7 909.3L121.8 909.0L123.0 901.9L124.2 883.7L125.3 879.3L126.5 870.4L127.7 854.8L128.8 838.9L130.0 839.0L131.2 847.2L132.3 853.7L133.5 862.9L134.7 864.0L135.8 863.1L137.0 864.2L138.2 859.9L139.3 850.2L140.5 861.0L141.7 865.4L142.8 859.1L144.0 854.0L145.2 860.3L146.3 870.5L147.5 887.0L148.7 887.7L149.8 893.6L151.0 906.9L152.2 907.7L153.3 911.2L154.5 898.4L155.7 896.1L156.8 897.5L158.0 897.1L159.2 889.0L160.3 885.0L161.5 872.4L162.7 872.0L163.8 867.9L165.0 863.6L166.2 863.4L167.3 855.3L168.5 854.0L169.7 866.8L170.8 873.9L172.0 884.3L173.2 894.2L174.3 904.6L175.5 908.2L176.7 919.0L177.8 907.5L179.0 912.3L180.2 905.3L181.3 892.6L182.5 885.0L183.7 875.7L184.8 873.0L186.0 874.8L187.2 883.5L188.3 877.3L189.5 874.5L190.7 879.0L191.8 881.9L193.0 873.7L194.2 863.4L195.3 866.7L196.5 864.0L197.7 893.4L198.8 895.7L200.0 902.7L201.2 894.4L202.3 879.4L203.5 879.4L204.7 866.4L205.8 866.9L207.0 848.9L208.2 846.0L209.3 844.0L210.5 875.2L211.7 894.0L212.8 882.9L214.0 884.8L215.2 877.3L216.3 863.0L217.5 856.8L218.7 849.5L219.8 845.6L221.0 848.6L222.2 860.9L223.3 863.7L224.5 873.9L225.7 870.7L226.8 876.7L228.0 865.8L229.2 860.7L230.3 847.8L231.5 837.7L232.7 838.8L233.8 833.2L235.0 823.0L236.2 830.1L237.3 827.4L238.5 825.1L239.7 829.5L240.8 829.2L242.0 832.0L243.2 828.5L244.3 832.3L245.5 840.8L246.7 844.4L247.8 844.9L249.0 855.1L250.2 854.0L251.3 859.7L252.5 868.6L253.7 867.4L254.8 869.5L256.0 886.3L257.2 889.0L258.3 905.3L259.5 911.5L260.7 924.0L261.8 933.0L263.0 932.1L264.2 952.6L265.3 957.0L266.5 941.4L267.7 932.7L268.8 927.3L270.0 917.9L271.2 908.4L272.3 888.4L273.5 889.0L274.7 890.0L275.8 905.6L277.0 915.3L278.2 919.0L279.3 917.0L280.5 914.4L281.7 914.8L282.8 905.2L284.0 902.6L285.2 902.7L286.3 911.9L287.5 912.5L288.7 911.0L289.8 915.5L291.0 918.2L292.2 921.6L293.3 923.2L294.5 925.9L295.7 925.5L296.8 931.0L298.0 936.0L299.2 928.9L300.3 919.4L301.5 910.5L302.7 903.8L303.8 897.1L305.0 885.5L306.2 878.0L307.3 885.7L308.5 891.5L309.7 900.8L310.8 909.5L312.0 918.8L313.2 931.0L314.3 909.8L315.5 907.1L316.7 895.1L317.8 888.0L319.0 895.7L320.2 906.1L321.3 908.7L322.5 914.4L323.7 919.2L324.8 929.0L326.0 936.8L327.2 936.9L328.3 939.1L329.5 943.7L330.7 955.0L331.8 944.7L333.0 947.1L334.2 937.2L335.3 927.8L336.5 927.2L337.7 915.0L338.8 918.7L340.0 919.6L341.2 911.4L342.3 912.1L343.5 919.0L344.7 914.9L345.8 906.2L347.0 886.4L348.2 884.8L349.3 869.2L350.5 859.0L351.7 848.2L352.8 843.0L354.0 835.9L355.2 838.8L356.3 837.8L357.5 844.2L358.7 850.1L359.8 842.0L361.0 846.7L362.2 848.3L363.3 860.3L364.5 871.7L365.7 875.9L366.8 864.8L368.0 854.1L369.2 854.7L370.3 847.0L371.5 844.5L372.7 851.5L373.8 855.4L375.0 859.2L376.2 862.5L377.3 864.0L378.5 851.4L379.7 838.1L380.8 826.5L382.0 824.0L383.2 832.3L384.3 837.5L385.5 834.7L386.7 847.0L387.8 849.8L389.0 841.3L390.2 849.9L391.3 843.8L392.5 846.4L393.7 843.9L394.8 844.0L396.0 863.2L397.2 869.3L398.3 889.0L399.5 892.3L400.7 911.0L401.8 903.1L403.0 881.4L404.2 869.2L405.3 859.2L406.5 834.5L407.7 832.4L408.8 849.3L410.0 862.8L411.2 868.3L412.3 871.1L413.5 876.7L414.7 866.4L415.8 856.7L417.0 853.6L418.2 847.5L419.3 841.2L420.5 839.8L421.7 828.0L422.8 821.5L424.0 830.3L425.2 827.7L426.3 835.7L427.5 842.4L428.7 847.2L429.8 852.0L431.0 849.4L432.2 857.4L433.3 845.6L434.5 846.1L435.7 849.7L436.8 844.0L438.0 855.2L439.2 865.3L440.3 869.0L441.5 853.1L442.7 847.1L443.8 838.7L445.0 827.0L446.2 837.4L447.3 843.4L448.5 853.0L449.7 864.0L450.8 867.1L452.0 871.6L453.2 870.8L454.3 871.9L455.5 876.7L456.7 867.2L457.8 858.4L459.0 844.0L460.2 856.5L461.3 865.7L462.5 871.7L463.7 883.5L464.8 890.0L466.0 878.5L467.2 866.0L468.3 861.1L469.5 845.7L470.7 834.5L471.8 835.0L473.0 837.1L474.2 827.5L475.3 825.5L476.5 827.0L477.7 825.2L478.8 835.4L480.0 835.8L481.2 841.9L482.3 839.6L483.5 849.0L484.7 849.6L485.8 849.9L487.0 863.0L488.2 859.5L489.3 859.0L490.5 861.9L491.7 860.7L492.8 864.0L494.0 886.2L495.2 898.7L496.3 909.0L497.5 921.1L498.7 922.6L499.8 933.4L501.0 938.7L502.2 915.5L503.3 909.0L504.5 928.6L505.7 939.7L506.8 949.3L508.0 966.0L509.2 954.7L510.3 939.4L511.5 921.0L512.7 926.8L513.8 931.9L515.0 943.7L516.2 934.1L517.3 927.9L518.5 920.3L519.7 914.0L520.8 903.5L522.0 901.3L523.2 895.7L524.3 891.7L525.5 888.6L526.7 884.8L527.8 876.7L529.0 868.6L530.2 881.7L531.3 881.3L532.5 892.6L533.7 889.4L534.8 881.5L536.0 889.0L537.2 876.8L538.3 874.9L539.5 859.5L540.7 855.5L541.8 847.8L543.0 840.7L544.2 839.3L545.3 835.3L546.5 844.8L547.7 844.0L548.8 859.6L550.0 891.5L551.2 892.3L552.3 893.6L553.5 890.8L554.7 891.4L555.8 896.9L557.0 887.2L558.2 889.4L559.3 891.5L560.5 900.0L561.7 908.6L562.8 916.4L564.0 928.8L565.2 930.2L566.3 917.1L567.5 911.0L568.7 932.4L569.8 941.0L571.0 916.6L572.2 907.4L573.3 885.0L574.5 877.5L575.7 849.0L576.8 851.0L578.0 852.9L579.2 864.0L580.3 856.9L581.5 857.7L582.7 853.6L583.8 851.8L585.0 861.8L586.2 869.3L587.3 873.5L588.5 884.0L589.7 872.8L590.8 865.5L592.0 861.2L593.2 838.0L594.3 824.3L595.5 809.6L596.7 808.0L597.8 812.8L599.0 820.1L600.2 830.8L601.3 829.7L602.5 834.5L603.7 823.5L604.8 825.0L606.0 818.8L607.2 808.8L608.3 806.0L609.5 808.5L610.7 816.9L611.8 819.8L613.0 822.6L614.2 824.5L615.3 841.2L616.5 851.0L617.7 860.5L618.8 851.1L620.0 849.6L621.2 851.4L622.3 841.2L623.5 837.0L624.7 839.4L625.8 843.3L627.0 844.5L628.2 843.8L629.3 848.5L630.5 854.0L631.7 852.9L632.8 850.2L634.0 849.1L635.2 845.1L636.3 844.3L637.5 836.9L638.7 834.6L639.8 833.0L641.0 845.4L642.2 855.0L643.3 872.6L644.5 884.8L645.7 904.0L646.8 900.3L648.0 897.6L649.2 898.9L650.3 904.7L651.5 897.2L652.7 896.6L653.8 895.0L655.0 906.4L656.2 916.8L657.3 926.6L658.5 923.0L659.7 937.5L660.8 923.6L662.0 908.1L663.2 904.1L664.3 880.0L665.5 873.8L666.7 848.0L667.8 850.5L669.0 865.3L670.2 875.3L671.3 881.0L672.5 881.7L673.7 898.2L674.8 906.0L676.0 898.9L677.2 907.8L678.3 897.7L679.5 894.8L680.7 892.9L681.8 891.5L683.0 883.1L684.2 880.1L685.3 874.6L686.5 865.2L687.7 859.0L688.8 850.8L690.0 853.9L691.2 844.9L692.3 844.4L693.5 836.0L694.7 833.4L695.8 832.0L697.0 818.1L698.2 824.4L699.3 807.1L700.5 799.2L701.7 789.0L702.8 785.6L704.0 803.8L705.2 810.5L706.3 824.5L707.5 821.7L708.7 824.4L709.8 818.6L711.0 814.5L712.2 818.0L713.3 845.5L714.5 871.7L715.7 891.5L716.8 898.5L718.0 915.2L719.2 917.4L720.3 917.6L721.5 915.3L722.7 910.0L723.8 904.9L725.0 905.2L726.2 895.0L727.3 897.4L728.5 904.0L729.7 911.8L730.8 923.9L732.0 928.7L733.2 931.0L734.3 931.3L735.5 931.5L736.7 936.0L737.8 923.0L739.0 912.3L740.2 897.7L741.3 898.7L742.5 915.0L743.7 921.4L744.8 928.8L746.0 911.4L747.2 902.2L748.3 884.8L749.5 866.7L750.7 858.1L751.8 840.7L753.0 818.5L754.2 807.0L755.3 798.3L756.5 806.1L757.7 813.2L758.8 809.6L760.0 807.1L761.2 819.4L762.3 832.0L763.5 832.7L764.7 815.8L765.8 819.0L767.0 820.8L768.2 818.5L769.3 823.3L770.5 826.3L771.7 827.1L772.8 832.0L774.0 833.2L775.2 838.2L776.3 844.7L777.5 844.3L778.7 844.0L779.8 833.7L781.0 818.2L782.2 812.9L783.3 798.5L784.5 793.9L785.7 801.3L786.8 794.1L788.0 795.5L789.2 791.6L790.3 792.0L791.5 792.7L792.7 774.8L793.8 777.1L795.0 768.0L796.2 782.9L797.3 792.7L798.5 812.0L799.7 818.3L800.8 825.5L802.0 818.3L803.2 824.9L804.3 831.8L805.5 833.0L806.7 835.0L807.8 828.2L809.0 832.3L810.2 830.5L811.3 832.3L812.5 827.0L813.7 839.0L814.8 857.7L816.0 862.6L817.2 876.7L818.3 877.8L819.5 870.2L820.7 861.8L821.8 864.4L823.0 854.0L824.2 850.0L825.3 854.8L826.5 862.8L827.7 857.6L828.8 860.6L830.0 860.1L831.2 856.4L832.3 862.2L833.5 866.8L834.7 866.7L835.8 867.5L837.0 861.4L838.2 875.6L839.3 875.1L840.5 877.6L841.7 880.1L842.8 876.7L844.0 869.8L845.2 868.0L846.3 867.8L847.5 849.7L848.7 849.9L849.8 847.0L851.0 845.1L852.2 845.3L853.3 835.5L854.5 828.7L855.7 830.4L856.8 826.0L858.0 818.1L859.2 824.1L860.3 816.6L861.5 820.3L862.7 814.4L863.8 825.2L865.0 817.2L866.2 828.4L867.3 819.2L868.5 827.0L869.7 829.4L870.8 827.5L872.0 835.2L873.2 840.0L874.3 837.6L875.5 842.2L876.7 847.0L877.8 847.0L879.0 836.7L880.2 849.0L881.3 868.6L882.5 883.9L883.7 899.0L884.8 886.5L886.0 888.6L887.2 866.7L888.3 880.4L889.5 899.0L890.7 914.1L891.8 933.7L893.0 926.1L894.2 922.2L895.3 911.0L896.5 912.8L897.7 922.7L898.8 932.5L900.0 917.4L901.2 905.2L902.3 893.7L903.5 878.9L904.7 864.0L905.8 865.1L907.0 869.6L908.2 876.1L909.3 881.5L910.5 884.0L911.7 886.2L912.8 872.6L914.0 872.8L915.2 864.0L916.3 852.2L917.5 849.0L918.7 862.0L919.8 863.2L921.0 864.6L922.2 863.4L923.3 879.0L924.5 875.0L925.7 876.5L926.8 883.6L928.0 876.2L929.2 873.1L930.3 866.9L931.5 864.5L932.7 866.8L933.8 866.7L935.0 892.8L936.2 890.6L937.3 900.5L938.5 909.0L939.7 905.4L940.8 897.8L942.0 904.7L943.2 895.9L944.3 894.0L945.5 892.6L946.7 890.1L947.8 883.8L949.0 884.7L950.2 882.0L951.3 872.4L952.5 874.0L953.7 840.3L954.8 831.7L956.0 809.0L957.2 822.6L958.3 839.0L959.5 855.7L960.7 864.0L961.8 866.2L963.0 854.4L964.2 861.0L965.3 857.9L966.5 854.2L967.7 850.9L968.8 850.6L970.0 855.7L971.2 864.8L972.3 863.4L973.5 871.7L974.7 867.5L975.8 868.1L977.0 860.4L978.2 862.8L979.3 857.6L980.5 856.7L981.7 851.8L982.8 854.4L984.0 867.4L985.2 882.5L986.3 891.5L987.5 894.7L988.7 905.5L989.8 911.8L991.0 912.6L992.2 910.9L993.3 921.0L994.5 919.0L995.7 925.0L996.8 910.4L998.0 895.5L999.2 869.2L1000.3 866.9L1001.5 849.0L1002.7 843.1L1003.8 850.6L1005.0 846.1L1006.2 844.0L1007.3 840.9L1008.5 842.0L1009.7 849.6L1010.8 879.2L1012.0 876.7L1013.2 871.3L1014.3 863.8L1015.5 859.6L1016.7 855.5L1017.8 849.9L1019.0 849.0L1020.2 849.5L1021.3 855.4L1022.5 849.3L1023.7 858.8L1024.8 856.8L1026.0 859.0L1027.2 853.8L1028.3 843.5L1029.5 844.2L1030.7 830.6L1031.8 824.4L1033.0 814.3L1034.2 812.0L1035.3 812.0L1036.5 815.7L1037.7 817.1L1038.8 814.4L1040.0 812.8L1041.2 821.0L1042.3 820.8L1043.5 831.6L1044.7 835.1L1045.8 852.3L1047.0 861.9L1048.2 872.1L1049.3 876.7L1050.5 895.2L1051.7 910.9L1052.8 927.1L1054.0 933.7L1055.2 911.8L1056.3 900.0L1057.5 911.3L1058.7 919.0L1059.8 943.7L1061.0 950.1L1062.2 952.2L1063.3 958.1L1064.5 960.5L1065.7 945.2L1066.8 935.2L1068.0 914.7L1069.2 899.5L1070.3 894.0L1071.5 901.3L1072.7 901.2L1073.8 900.7L1075.0 911.2L1076.2 909.0L1077.3 910.6L1078.5 901.1L1079.7 906.8L1080.8 909.0L1082.0 906.0L1083.2 915.4L1084.3 923.1L1085.5 927.4L1086.7 931.0L1087.8 919.8L1089.0 914.1L1090.2 902.4L1091.3 891.3L1092.5 879.3L1093.7 865.5L1094.8 862.5L1096.0 855.8L1097.2 864.7L1098.3 869.2L1099.5 857.6L1100.7 856.3L1101.8 856.8L1103.0 867.7L1104.2 872.0L1105.3 885.6L1106.5 904.0L1107.7 912.1L1108.8 902.5L1110.0 909.2L1111.2 914.1L1112.3 914.8L1113.5 913.8L1114.7 909.0L1115.8 902.3L1117.0 903.9L1118.2 900.7L1119.3 900.6L1120.5 910.0L1121.7 891.9L1122.8 898.6L1124.0 894.0L1125.2 902.3L1126.3 907.8L1127.5 906.5L1128.7 921.9L1129.8 917.6L1131.0 928.9L1132.2 929.8L1133.3 931.1L1134.5 937.5L1135.7 925.6L1136.8 917.8L1138.0 905.4L1139.2 903.3L1140.3 883.0L1141.5 870.5L1142.7 871.8L1143.8 877.1L1145.0 880.1L1146.2 887.3L1147.3 894.0L1148.5 884.5L1149.7 876.9L1150.8 872.2L1152.0 868.2L1153.2 859.7L1154.3 853.6L1155.5 844.0L1156.7 841.7L1157.8 838.4L1159.0 839.7L1160.2 835.7L1161.3 836.1L1162.5 835.5L1163.7 834.5L1164.8 835.5L1166.0 837.6L1167.2 847.3L1168.3 843.9L1169.5 844.2L1170.7 851.6L1171.8 849.6L1173.0 852.6L1174.2 859.8L1175.3 856.0L1176.5 865.5L1177.7 857.1L1178.8 849.6L1180.0 828.9L1181.2 821.5L1182.3 816.7L1183.5 799.7L1184.7 800.7L1185.8 807.0L1187.0 818.3L1188.2 819.1L1189.3 832.0L1190.5 879.8L1191.7 912.6L1192.8 914.8L1194.0 911.1L1195.2 921.6L1196.3 920.1L1197.5 928.8L1198.7 927.0L1199.8 930.9L1201.0 933.1L1202.2 938.6L1203.3 940.4L1204.5 940.0L1205.7 935.4L1206.8 933.0L1208.0 921.3L1209.2 908.6L1210.3 902.9L1211.5 894.0L1212.7 887.8L1213.8 889.4L1215.0 892.0L1216.2 900.3L1217.3 888.1L1218.5 895.0L1219.7 886.8L1220.8 885.2L1222.0 892.3L1223.2 888.0L1224.3 890.9L1225.5 881.6L1226.7 884.7L1227.8 904.9L1229.0 914.6L1230.2 925.4L1231.3 936.7L1232.5 943.7L1233.7 925.3L1234.8 908.6L1236.0 894.8L1237.2 874.1L1238.3 854.0L1239.5 859.8L1240.7 850.2L1241.8 852.0L1243.0 857.3L1244.2 854.4L1245.3 855.6L1246.5 848.7L1247.7 831.5L1248.8 817.6L1250.0 825.5L1251.2 835.2L1252.3 825.7L1253.5 831.7L1254.7 839.0L1255.8 830.5L1257.0 834.3L1258.2 821.1L1259.3 810.7L1260.5 807.2L1261.7 796.5L1262.8 804.7L1264.0 822.2L1265.2 845.6L1266.3 847.0L1267.5 845.9L1268.7 847.4L1269.8 843.0L1271.0 845.5L1272.2 837.8L1273.3 834.6L1274.5 831.5L1275.7 829.5L1276.8 860.2L1278.0 895.0L1279.2 882.6L1280.3 862.9L1281.5 839.0L1282.7 839.8L1283.8 862.9L1285.0 881.0L1286.2 891.5L1287.3 884.1L1288.5 872.1L1289.7 862.2L1290.8 856.8L1292.0 862.2L1293.2 859.1L1294.3 859.6L1295.5 864.2L1296.7 875.0L1297.8 877.6L1299.0 873.2L1300.2 879.0L1301.3 894.8L1302.5 902.7L1303.7 888.1L1304.8 876.7L1306.0 879.7L1307.2 880.8L1308.3 874.7L1309.5 861.8L1310.7 864.0L1311.8 867.7L1313.0 872.5L1314.2 874.1L1315.3 878.7L1316.5 882.8L1317.7 888.3L1318.8 883.2L1320.0 881.2L1321.2 878.8L1322.3 874.9L1323.5 876.7L1324.7 895.3L1325.8 909.0L1327.0 921.0L1328.2 933.9L1329.3 944.7L1330.5 951.6L1331.7 930.9L1332.8 907.3L1334.0 904.1L1335.2 889.0L1336.3 892.9L1337.5 890.5L1338.7 896.6L1339.8 897.7L1341.0 904.0L1342.2 897.1L1343.3 883.7L1344.5 873.0L1345.7 872.2L1346.8 862.7L1348.0 854.0L1349.2 855.3L1350.3 850.8L1351.5 850.5L1352.7 846.3L1353.8 847.6L1355.0 865.3L1356.2 876.7L1357.3 869.5L1358.5 858.0L1359.7 872.3L1360.8 906.0L1362.0 911.9L1363.2 910.0L1364.3 915.5L1365.5 911.0L1366.7 914.0L1367.8 915.8L1369.0 926.6L1370.2 943.7L1371.3 939.0L1372.5 941.0L1373.7 939.7L1374.8 936.0L1376.0 972.0L1377.2 952.1L1378.3 933.0L1379.5 909.0L1380.7 868.5L1381.8 881.5L1383.0 885.4L1384.2 885.2L1385.3 899.0L1386.5 898.8L1387.7 894.2L1388.8 897.8L1390.0 897.2L1391.2 894.0L1392.3 902.5L1393.5 903.4L1394.7 908.7L1395.8 916.0L1397.0 907.9L1398.2 897.8L1399.3 884.0L1400.5 900.9L1401.7 915.0L1402.8 914.3L1404.0 910.7L1405.2 903.6L1406.3 889.1L1407.5 893.2L1408.7 884.0L1409.8 887.2L1411.0 896.0L1412.2 900.1L1413.3 903.9L1414.5 910.0L1415.7 905.2L1416.8 900.5L1418.0 891.9L1419.2 886.6L1420.3 893.7L1421.5 899.3L1422.7 902.0L1423.8 905.0L1425.0 893.7L1426.2 884.2L1427.3 875.0L1428.5 872.1L1429.7 871.5L1430.8 880.5L1432.0 868.2L1433.2 863.4L1434.3 861.0L1435.5 892.8L1436.7 923.8L1437.8 916.7L1439.0 912.3L1440.2 898.5L1441.3 900.0L1442.5 890.2L1443.7 886.2L1444.8 880.0L1446.0 866.0L1447.2 878.6L1448.3 884.7L1449.5 891.8L1450.7 904.0L1451.8 893.0L1453.0 890.2L1454.2 876.0L1455.3 876.7L1456.5 879.9" fill="none" stroke="#7e57c2" stroke-width="1.2" stroke-linejoin="round"/>
<path d="M7.5 840.5L8.7 841.0L9.8 841.9L11.0 842.9L12.2 844.6L13.3 847.3L14.5 851.0L15.7 854.9L16.8 858.8L18.0 862.7L19.2 866.6L20.3 870.4L21.5 874.3L22.7 878.2L23.8 882.1L25.0 886.0L26.2 889.9L27.3 893.8L28.5 897.7L29.7 901.6L30.8 903.4L32.0 902.8L33.2 899.9L34.3 896.6L35.5 893.2L36.7 889.7L37.8 885.7L39.0 881.4L40.2 877.0L41.3 872.5L42.5 868.1L43.7 863.7L44.8 859.2L46.0 855.0L47.2 852.2L48.3 850.7L49.5 850.5L50.7 850.2L51.8 850.0L53.0 849.8L54.2 849.5L55.3 849.3L56.5 850.2L57.7 852.5L58.8 856.1L60.0 859.8L61.2 863.5L62.3 867.1L63.5 870.9L64.7 874.8L65.8 878.9L67.0 883.2L68.2 887.4L69.3 891.7L70.5 896.0L71.7 900.1L72.8 904.0L74.0 907.6L75.2 911.1L76.3 914.7L77.5 918.2L78.7 921.3L79.8 922.9L81.0 923.2L82.2 922.7L83.3 922.1L84.5 921.5L85.7 921.3L86.8 921.4L88.0 921.7L89.2 922.1L90.3 922.4L91.5 922.8L92.7 923.1L93.8 923.5L95.0 924.2L96.2 925.8L97.3 928.2L98.5 931.0L99.7 933.8L100.8 936.6L102.0 939.1L103.2 941.2L104.3 943.1L105.5 945.0L106.7 946.8L107.8 947.7L109.0 947.5L110.2 946.1L111.3 944.5L112.5 942.9L113.7 941.3L114.8 939.2L116.0 936.0L117.2 931.8L118.3 927.1L119.5 922.3L120.7 917.6L121.8 912.8L123.0 908.1L124.2 903.8L125.3 899.7L126.5 896.0L127.7 892.3L128.8 888.5L130.0 884.8L131.2 881.1L132.3 877.3L133.5 873.9L134.7 871.0L135.8 868.5L137.0 866.3L138.2 864.1L139.3 861.9L140.5 859.7L141.7 857.7L142.8 856.5L144.0 856.2L145.2 856.8L146.3 857.3L147.5 858.5L148.7 860.4L149.8 863.0L151.0 865.7L152.2 868.4L153.3 871.1L154.5 873.7L155.7 876.1L156.8 878.4L158.0 880.5L159.2 882.7L160.3 884.8L161.5 886.9L162.7 887.7L163.8 887.3L165.0 885.8L166.2 884.2L167.3 882.6L168.5 881.0L169.7 880.2L170.8 880.3L172.0 881.4L173.2 882.8L174.3 884.2L175.5 885.6L176.7 887.0L177.8 888.6L179.0 890.4L180.2 892.3L181.3 894.1L182.5 896.0L183.7 897.9L184.8 898.7L186.0 898.3L187.2 896.6L188.3 894.8L189.5 892.9L190.7 891.1L191.8 889.2L193.0 887.3L194.2 885.4L195.3 883.4L196.5 881.5L197.7 879.8L198.8 879.0L200.0 879.4L201.2 880.5L202.3 881.6L203.5 882.7L204.7 883.2L205.8 882.9L207.0 881.9L208.2 880.7L209.3 879.6L210.5 878.9L211.7 879.0L212.8 879.8L214.0 881.0L215.2 881.9L216.3 881.7L217.5 880.6L218.7 878.7L219.8 876.8L221.0 874.9L222.2 873.0L223.3 871.1L224.5 870.3L225.7 870.7L226.8 872.3L228.0 872.6L229.2 871.4L230.3 868.9L231.5 866.3L232.7 863.7L233.8 861.2L235.0 858.6L236.2 856.0L237.3 853.5L238.5 851.2L239.7 849.0L240.8 847.0L242.0 844.9L243.2 842.8L244.3 840.8L245.5 838.7L246.7 836.6L247.8 834.6L249.0 834.1L250.2 835.3L251.3 838.1L252.5 840.9L253.7 843.6L254.8 846.4L256.0 849.2L257.2 852.3L258.3 856.2L259.5 860.9L260.7 866.3L261.8 871.7L263.0 877.0L264.2 882.4L265.3 887.9L266.5 893.7L267.7 899.7L268.8 905.7L270.0 911.7L271.2 916.9L272.3 920.4L273.5 922.1L274.7 922.8L275.8 923.6L277.0 924.2L278.2 924.0L279.3 922.9L280.5 921.0L281.7 919.1L282.8 917.3L284.0 915.4L285.2 913.5L286.3 911.7L287.5 910.2L288.7 909.6L289.8 909.8L291.0 910.2L292.2 910.7L293.3 911.2L294.5 911.7L295.7 912.2L296.8 912.7L298.0 913.2L299.2 913.5L300.3 913.2L301.5 912.4L302.7 911.1L303.8 909.8L305.0 908.5L306.2 907.2L307.3 905.9L308.5 904.6L309.7 903.6L310.8 903.0L312.0 902.7L313.2 902.5L314.3 902.3L315.5 902.1L316.7 901.9L317.8 901.7L319.0 902.4L320.2 903.9L321.3 906.4L322.5 908.8L323.7 911.2L324.8 913.2L326.0 914.8L327.2 915.8L328.3 916.8L329.5 917.8L330.7 919.0L331.8 920.5L333.0 922.3L334.2 924.3L335.3 926.2L336.5 928.1L337.7 929.3L338.8 929.8L340.0 929.7L341.2 929.5L342.3 929.4L343.5 929.2L344.7 928.2L345.8 925.9L347.0 922.3L348.2 918.4L349.3 914.6L350.5 910.7L351.7 906.6L352.8 902.1L354.0 897.0L355.2 891.6L356.3 886.1L357.5 880.7L358.7 875.2L359.8 870.8L361.0 867.6L362.2 865.6L363.3 863.8L364.5 861.9L365.7 860.1L366.8 858.9L368.0 858.4L369.2 858.5L370.3 858.8L371.5 859.1L372.7 859.4L373.8 859.7L375.0 860.0L376.2 860.1L377.3 859.4L378.5 857.9L379.7 855.8L380.8 853.8L382.0 851.7L383.2 849.7L384.3 847.9L385.5 846.6L386.7 845.7L387.8 845.0L389.0 844.3L390.2 843.5L391.3 842.8L392.5 842.0L393.7 841.6L394.8 843.0L396.0 846.1L397.2 850.5L398.3 855.0L399.5 859.4L400.7 863.9L401.8 867.7L403.0 870.8L404.2 873.0L405.3 875.2L406.5 877.4L407.7 879.6L408.8 881.3L410.0 882.0L411.2 881.6L412.3 880.6L413.5 879.6L414.7 878.7L415.8 877.7L417.0 875.5L418.2 872.0L419.3 867.3L420.5 862.7L421.7 858.0L422.8 853.3L424.0 849.3L425.2 846.3L426.3 844.3L427.5 842.7L428.7 841.0L429.8 839.4L431.0 837.8L432.2 836.5L433.3 836.2L434.5 836.9L435.7 838.4L436.8 839.9L438.0 841.4L439.2 842.9L440.3 844.4L441.5 845.8L442.7 847.2L443.8 848.7L445.0 850.1L446.2 851.5L447.3 852.8L448.5 854.0L449.7 855.1L450.8 856.2L452.0 857.3L453.2 858.4L454.3 859.4L455.5 860.2L456.7 860.2L457.8 859.6L459.0 858.9L460.2 859.0L461.3 860.0L462.5 861.8L463.7 863.6L464.8 865.4L466.0 867.0L467.2 867.7L468.3 867.4L469.5 866.2L470.7 865.1L471.8 863.9L473.0 862.8L474.2 861.6L475.3 860.4L476.5 859.0L477.7 857.0L478.8 854.5L480.0 851.7L481.2 849.0L482.3 846.3L483.5 843.5L484.7 841.9L485.8 841.5L487.0 842.2L488.2 843.0L489.3 843.8L490.5 844.6L491.7 846.4L492.8 849.7L494.0 854.4L495.2 859.5L496.3 864.6L497.5 869.8L498.7 874.9L499.8 880.2L501.0 885.6L502.2 891.1L503.3 896.7L504.5 902.2L505.7 907.7L506.8 912.7L508.0 917.2L509.2 921.1L510.3 924.9L511.5 928.8L512.7 931.6L513.8 932.9L515.0 932.8L516.2 932.3L517.3 931.7L518.5 931.1L519.7 929.7L520.8 927.6L522.0 925.1L523.2 922.5L524.3 919.9L525.5 917.3L526.7 914.7L527.8 911.9L529.0 909.0L530.2 906.1L531.3 903.2L532.5 900.2L533.7 897.3L534.8 894.4L536.0 891.5L537.2 888.6L538.3 885.8L539.5 883.4L540.7 881.3L541.8 879.5L543.0 877.6L544.2 875.7L545.3 873.9L546.5 872.0L547.7 870.1L548.8 868.8L550.0 868.1L551.2 868.0L552.3 868.0L553.5 868.0L554.7 868.9L555.8 870.7L557.0 873.3L558.2 876.0L559.3 878.7L560.5 881.5L561.7 884.5L562.8 887.7L564.0 891.3L565.2 894.8L566.3 898.3L567.5 901.9L568.7 904.9L569.8 907.4L571.0 909.2L572.2 910.8L573.3 911.8L574.5 911.4L575.7 909.4L576.8 906.6L578.0 903.8L579.2 900.9L580.3 897.5L581.5 893.6L582.7 889.4L583.8 885.2L585.0 881.1L586.2 876.9L587.3 872.7L588.5 868.8L589.7 865.6L590.8 862.9L592.0 860.5L593.2 858.1L594.3 855.7L595.5 853.3L596.7 850.9L597.8 848.5L599.0 846.1L600.2 843.7L601.3 841.2L602.5 838.5L603.7 835.8L604.8 833.1L606.0 830.4L607.2 827.7L608.3 825.0L609.5 822.3L610.7 820.4L611.8 819.8L613.0 820.3L614.2 821.2L615.3 822.1L616.5 823.0L617.7 823.9L618.8 824.8L620.0 825.8L621.2 827.1L622.3 828.7L623.5 830.6L624.7 832.5L625.8 834.4L627.0 836.3L628.2 838.2L629.3 840.1L630.5 842.0L631.7 843.4L632.8 844.3L634.0 844.6L635.2 844.8L636.3 844.9L637.5 845.1L638.7 845.2L639.8 845.3L641.0 845.6L642.2 847.0L643.3 849.4L644.5 852.7L645.7 856.0L646.8 859.3L648.0 862.8L649.2 866.6L650.3 870.7L651.5 875.0L652.7 879.3L653.8 883.6L655.0 887.8L656.2 891.7L657.3 895.4L658.5 898.8L659.7 902.2L660.8 905.6L662.0 907.1L663.2 906.7L664.3 904.5L665.5 902.2L666.7 899.9L667.8 897.7L669.0 895.4L670.2 893.2L671.3 891.1L672.5 889.2L673.7 887.5L674.8 885.7L676.0 883.9L677.2 882.5L678.3 882.0L679.5 882.7L680.7 884.1L681.8 885.4L683.0 886.8L684.2 888.2L685.3 888.5L686.5 887.2L687.7 884.3L688.8 881.0L690.0 877.6L691.2 874.3L692.3 870.8L693.5 867.1L694.7 863.1L695.8 858.9L697.0 854.8L698.2 850.6L699.3 846.5L700.5 842.0L701.7 837.3L702.8 832.1L704.0 827.0L705.2 821.8L706.3 817.4L707.5 814.4L708.7 812.6L709.8 811.4L711.0 810.1L712.2 809.5L713.3 810.9L714.5 814.5L715.7 819.5L716.8 824.5L718.0 830.6L719.2 837.7L720.3 845.9L721.5 854.1L722.7 862.3L723.8 869.8L725.0 876.6L726.2 882.5L727.3 888.3L728.5 894.1L729.7 898.9L730.8 902.3L732.0 904.4L733.2 906.1L734.3 907.7L735.5 909.4L736.7 910.5L737.8 911.0L739.0 911.0L740.2 911.0L741.3 911.3L742.5 912.0L743.7 913.1L744.8 914.3L746.0 914.5L747.2 912.9L748.3 909.5L749.5 905.4L750.7 901.2L751.8 896.9L753.0 891.8L754.2 886.0L755.3 879.6L756.5 873.2L757.7 866.8L758.8 860.4L760.0 854.8L761.2 850.0L762.3 846.0L763.5 841.9L764.7 837.9L765.8 833.9L767.0 829.9L768.2 826.3L769.3 824.1L770.5 823.3L771.7 823.5L772.8 823.8L774.0 824.4L775.2 825.5L776.3 827.0L777.5 828.5L778.7 830.0L779.8 831.5L781.0 831.8L782.2 830.9L783.3 828.9L784.5 826.8L785.7 824.7L786.8 822.6L788.0 820.6L789.2 818.3L790.3 815.4L791.5 811.9L792.7 808.0L793.8 804.0L795.0 800.1L796.2 796.2L797.3 793.9L798.5 793.4L799.7 794.7L800.8 796.1L802.0 797.4L803.2 798.8L804.3 800.6L805.5 803.2L806.7 806.6L807.8 810.5L809.0 814.4L810.2 818.3L811.3 822.2L812.5 826.1L813.7 829.8L814.8 833.5L816.0 837.2L817.2 840.9L818.3 844.7L819.5 847.8L820.7 850.1L821.8 851.7L823.0 853.2L824.2 854.7L825.3 856.2L826.5 857.7L827.7 859.2L828.8 860.6L830.0 861.4L831.2 861.6L832.3 861.5L833.5 861.4L834.7 861.3L835.8 861.1L837.0 861.3L838.2 861.8L839.3 862.6L840.5 863.4L841.7 864.2L842.8 865.0L844.0 865.8L845.2 866.3L846.3 866.3L847.5 865.8L848.7 865.0L849.8 864.1L851.0 863.3L852.2 862.5L853.3 861.6L854.5 860.8L855.7 860.0L856.8 858.6L858.0 856.7L859.2 854.2L860.3 851.7L861.5 849.1L862.7 846.5L863.8 844.0L865.0 841.4L866.2 838.9L867.3 836.8L868.5 835.0L869.7 833.4L870.8 831.8L872.0 830.2L873.2 829.0L874.3 828.8L875.5 829.9L876.7 831.7L877.8 833.6L879.0 835.5L880.2 837.9L881.3 840.8L882.5 844.1L883.7 847.5L884.8 850.8L886.0 854.1L887.2 857.4L888.3 861.2L889.5 865.5L890.7 870.5L891.8 875.6L893.0 880.8L894.2 885.9L895.3 890.7L896.5 894.6L897.7 897.7L898.8 900.3L900.0 902.9L901.2 905.6L902.3 908.2L903.5 909.4L904.7 909.1L905.8 907.4L907.0 905.5L908.2 903.6L909.3 901.7L910.5 899.5L911.7 896.7L912.8 893.2L914.0 889.6L915.2 885.9L916.3 882.3L917.5 878.6L918.7 875.1L919.8 872.7L921.0 871.4L922.2 871.2L923.3 870.9L924.5 870.6L925.7 870.4L926.8 870.1L928.0 869.9L929.2 869.6L930.3 869.4L931.5 869.4L932.7 870.0L933.8 871.1L935.0 872.4L936.2 873.7L937.3 875.1L938.5 876.4L939.7 877.7L940.8 879.0L942.0 880.2L943.2 881.3L944.3 882.5L945.5 883.6L946.7 884.8L947.8 885.9L949.0 887.1L950.2 888.2L951.3 888.7L952.5 887.6L953.7 885.0L954.8 881.5L956.0 878.0L957.2 874.6L958.3 871.1L959.5 867.6L960.7 865.0L961.8 863.3L963.0 862.5L964.2 861.7L965.3 860.9L966.5 860.2L967.7 859.4L968.8 858.8L970.0 859.3L971.2 860.9L972.3 863.4L973.5 865.9L974.7 868.4L975.8 870.7L977.0 871.9L978.2 871.9L979.3 871.0L980.5 870.0L981.7 869.1L982.8 869.1L984.0 870.3L985.2 872.6L986.3 875.1L987.5 877.6L988.7 880.1L989.8 882.6L991.0 885.1L992.2 887.5L993.3 890.0L994.5 892.5L995.7 895.0L996.8 897.5L998.0 900.0L999.2 901.7L1000.3 901.6L1001.5 899.6L1002.7 896.4L1003.8 893.2L1005.0 890.0L1006.2 886.8L1007.3 883.6L1008.5 880.5L1009.7 877.7L1010.8 875.1L1012.0 872.7L1013.2 870.2L1014.3 867.8L1015.5 865.3L1016.7 862.9L1017.8 861.4L1019.0 860.8L1020.2 861.2L1021.3 861.5L1022.5 861.9L1023.7 862.2L1024.8 862.5L1026.0 862.3L1027.2 861.2L1028.3 859.1L1029.5 856.8L1030.7 854.5L1031.8 852.1L1033.0 849.8L1034.2 847.5L1035.3 845.1L1036.5 842.9L1037.7 840.7L1038.8 838.5L1040.0 836.4L1041.2 834.3L1042.3 832.1L1043.5 830.0L1044.7 827.9L1045.8 827.8L1047.0 829.5L1048.2 833.2L1049.3 836.8L1050.5 840.9L1051.7 845.9L1052.8 851.8L1054.0 858.0L1055.2 864.2L1056.3 870.5L1057.5 876.8L1058.7 883.2L1059.8 889.6L1061.0 896.1L1062.2 902.5L1063.3 908.4L1064.5 913.5L1065.7 917.8L1066.8 921.0L1068.0 922.5L1069.2 922.4L1070.3 921.4L1071.5 920.5L1072.7 919.5L1073.8 918.4L1075.0 917.2L1076.2 915.8L1077.3 914.4L1078.5 913.1L1079.7 911.7L1080.8 910.4L1082.0 909.7L1083.2 909.8L1084.3 910.6L1085.5 911.3L1086.7 912.1L1087.8 912.9L1089.0 913.7L1090.2 914.1L1091.3 913.3L1092.5 911.2L1093.7 908.3L1094.8 905.4L1096.0 902.5L1097.2 899.6L1098.3 896.7L1099.5 893.8L1100.7 890.9L1101.8 888.1L1103.0 885.2L1104.2 882.4L1105.3 879.5L1106.5 877.6L1107.7 877.3L1108.8 878.7L1110.0 880.8L1111.2 883.0L1112.3 885.1L1113.5 887.2L1114.7 889.4L1115.8 891.8L1117.0 894.2L1118.2 896.6L1119.3 899.0L1120.5 900.8L1121.7 901.7L1122.8 901.8L1124.0 901.7L1125.2 901.6L1126.3 901.7L1127.5 902.0L1128.7 902.5L1129.8 903.2L1131.0 903.9L1132.2 904.6L1133.3 905.3L1134.5 906.0L1135.7 906.7L1136.8 907.4L1138.0 908.2L1139.2 908.3L1140.3 907.8L1141.5 906.6L1142.7 905.2L1143.8 903.8L1145.0 902.5L1146.2 901.1L1147.3 899.6L1148.5 897.5L1149.7 894.8L1150.8 891.9L1152.0 889.0L1153.2 886.1L1154.3 883.2L1155.5 880.2L1156.7 877.3L1157.8 874.5L1159.0 871.7L1160.2 869.1L1161.3 866.4L1162.5 863.7L1163.7 861.1L1164.8 858.4L1166.0 855.7L1167.2 853.1L1168.3 850.8L1169.5 849.5L1170.7 849.0L1171.8 849.1L1173.0 849.2L1174.2 849.3L1175.3 849.4L1176.5 849.5L1177.7 849.6L1178.8 849.7L1180.0 849.1L1181.2 847.9L1182.3 846.0L1183.5 844.0L1184.7 842.1L1185.8 840.2L1187.0 838.3L1188.2 836.9L1189.3 837.2L1190.5 839.2L1191.7 842.5L1192.8 845.7L1194.0 849.2L1195.2 854.1L1196.3 860.4L1197.5 867.9L1198.7 875.4L1199.8 883.3L1201.0 891.6L1202.2 900.3L1203.3 908.3L1204.5 914.9L1205.7 919.9L1206.8 923.4L1208.0 925.0L1209.2 924.6L1210.3 923.0L1211.5 921.3L1212.7 919.7L1213.8 918.0L1215.0 916.0L1216.2 913.7L1217.3 911.0L1218.5 908.3L1219.7 905.6L1220.8 902.9L1222.0 900.5L1223.2 898.6L1224.3 897.4L1225.5 896.3L1226.7 895.3L1227.8 894.5L1229.0 894.5L1230.2 895.2L1231.3 896.6L1232.5 898.0L1233.7 899.4L1234.8 899.7L1236.0 898.6L1237.2 896.1L1238.3 893.5L1239.5 890.8L1240.7 888.2L1241.8 885.6L1243.0 882.5L1244.2 878.7L1245.3 874.0L1246.5 868.8L1247.7 863.7L1248.8 858.5L1250.0 853.6L1251.2 849.7L1252.3 846.9L1253.5 845.0L1254.7 843.1L1255.8 841.3L1257.0 839.4L1258.2 837.5L1259.3 835.5L1260.5 833.4L1261.7 831.3L1262.8 829.7L1264.0 829.2L1265.2 829.9L1266.3 831.0L1267.5 831.5L1268.7 831.5L1269.8 831.1L1271.0 830.7L1272.2 830.3L1273.3 829.9L1274.5 830.7L1275.7 832.7L1276.8 836.0L1278.0 839.4L1279.2 842.7L1280.3 846.0L1281.5 849.1L1282.7 852.3L1283.8 855.4L1285.0 858.6L1286.2 861.6L1287.3 864.1L1288.5 866.0L1289.7 867.6L1290.8 869.1L1292.0 870.7L1293.2 872.2L1294.3 873.6L1295.5 874.9L1296.7 876.0L1297.8 877.0L1299.0 878.1L1300.2 878.9L1301.3 879.5L1302.5 880.0L1303.7 880.5L1304.8 881.0L1306.0 881.4L1307.2 881.6L1308.3 881.5L1309.5 880.9L1310.7 880.4L1311.8 879.8L1313.0 879.2L1314.2 878.6L1315.3 878.0L1316.5 877.4L1317.7 876.9L1318.8 876.3L1320.0 875.7L1321.2 875.3L1322.3 875.5L1323.5 876.3L1324.7 877.6L1325.8 879.6L1327.0 882.5L1328.2 886.2L1329.3 890.1L1330.5 894.0L1331.7 897.2L1332.8 899.6L1334.0 901.0L1335.2 902.2L1336.3 903.3L1337.5 904.5L1338.7 905.7L1339.8 906.8L1341.0 906.4L1342.2 904.4L1343.3 900.8L1344.5 897.3L1345.7 893.7L1346.8 890.1L1348.0 886.5L1349.2 883.3L1350.3 880.6L1351.5 878.5L1352.7 876.6L1353.8 874.7L1355.0 872.9L1356.2 871.0L1357.3 869.1L1358.5 868.2L1359.7 868.6L1360.8 870.3L1362.0 872.3L1363.2 874.4L1364.3 876.4L1365.5 879.2L1366.7 882.9L1367.8 887.5L1369.0 892.3L1370.2 897.2L1371.3 902.1L1372.5 906.9L1373.7 911.7L1374.8 916.5L1376.0 921.4L1377.2 926.2L1378.3 930.0L1379.5 931.6L1380.7 930.9L1381.8 928.9L1383.0 927.0L1384.2 925.0L1385.3 922.7L1386.5 920.0L1387.7 916.9L1388.8 913.6L1390.0 910.4L1391.2 907.1L1392.3 903.9L1393.5 900.6L1394.7 897.7L1395.8 896.2L1397.0 896.3L1398.2 897.5L1399.3 898.7L1400.5 899.9L1401.7 901.1L1402.8 902.3L1404.0 902.9L1405.2 903.0L1406.3 902.5L1407.5 902.0L1408.7 901.5L1409.8 901.0L1411.0 900.5L1412.2 900.1L1413.3 899.8L1414.5 899.6L1415.7 899.5L1416.8 899.5L1418.0 899.4L1419.2 899.3L1420.3 899.2L1421.5 899.2L1422.7 899.1L1423.8 898.5L1425.0 897.5L1426.2 895.8L1427.3 894.2L1428.5 892.5L1429.7 890.8L1430.8 889.1L1432.0 887.4L1433.2 885.7L1434.3 884.3L1435.5 883.8L1436.7 884.0L1437.8 884.7L1439.0 885.4L1440.2 886.1L1441.3 886.8L1442.5 887.5L1443.7 888.2L1444.8 889.1L1446.0 890.3L1447.2 891.7L1448.3 893.2L1449.5 894.6L1450.7 895.6L1451.8 895.2L1453.0 893.6L1454.2 891.1L1455.3 889.2L1456.5 888.3" fill="none" stroke="#f7d14a" stroke-width="1.3" stroke-linejoin="round"/>
<path d="M850 790.8H804M815.8 779.4L803.3 790.8L815.8 802.4" fill="none" stroke="#ffee44" stroke-width="1.9" stroke-linecap="round" stroke-linejoin="miter"/>
</svg>
<span id="t1" class="t" style="left:1736.0px;top:57.7px;font-size:13.5px;color:#c4c6cc;letter-spacing:-0.158px;transform:translateY(-50%);-webkit-text-stroke:0.25px;">116,000.00</span>
<span id="t2" class="t" style="left:1736.0px;top:95.0px;font-size:13.5px;color:#c4c6cc;letter-spacing:-0.158px;transform:translateY(-50%);-webkit-text-stroke:0.25px;">112,000.00</span>
<span id="t3" class="t" style="left:1736.0px;top:132.4px;font-size:13.5px;color:#c4c6cc;letter-spacing:-0.258px;transform:translateY(-50%);-webkit-text-stroke:0.25px;">108,000.00</span>
<span id="t4" class="t" style="left:1736.0px;top:169.7px;font-size:13.5px;color:#c4c6cc;letter-spacing:-0.258px;transform:translateY(-50%);-webkit-text-stroke:0.25px;">104,000.00</span>
<span id="t5" class="t" style="left:1736.0px;top:207.0px;font-size:13.5px;color:#c4c6cc;letter-spacing:-0.258px;transform:translateY(-50%);-webkit-text-stroke:0.25px;">100,000.00</span>
<span id="t6" class="t" style="left:1736.0px;top:244.4px;font-size:13.5px;color:#c4c6cc;letter-spacing:-0.174px;transform:translateY(-50%);-webkit-text-stroke:0.25px;">96,000.00</span>
<span id="t7" class="t" style="left:1736.0px;top:281.7px;font-size:13.5px;color:#c4c6cc;letter-spacing:-0.174px;transform:translateY(-50%);-webkit-text-stroke:0.25px;">92,000.00</span>
<span id="t8" class="t" style="left:1736.0px;top:319.0px;font-size:13.5px;color:#c4c6cc;letter-spacing:-0.174px;transform:translateY(-50%);-webkit-text-stroke:0.25px;">88,000.00</span>
<span id="t9" class="t" style="left:1736.0px;top:356.4px;font-size:13.5px;color:#c4c6cc;letter-spacing:-0.174px;transform:translateY(-50%);-webkit-text-stroke:0.25px;">84,000.00</span>
<span id="t10" class="t" style="left:1736.0px;top:393.7px;font-size:13.5px;color:#c4c6cc;letter-spacing:-0.174px;transform:translateY(-50%);-webkit-text-stroke:0.25px;">80,000.00</span>
<span id="t11" class="t" style="left:1736.0px;top:431.0px;font-size:13.5px;color:#c4c6cc;letter-spacing:-0.174px;transform:translateY(-50%);-webkit-text-stroke:0.25px;">76,000.00</span>
<span id="t12" class="t" style="left:1736.0px;top:468.4px;font-size:13.5px;color:#c4c6cc;letter-spacing:-0.174px;transform:translateY(-50%);-webkit-text-stroke:0.25px;">72,000.00</span>
<span id="t13" class="t" style="left:1736.0px;top:505.7px;font-size:13.5px;color:#c4c6cc;letter-spacing:-0.174px;transform:translateY(-50%);-webkit-text-stroke:0.25px;">68,000.00</span>
<span id="t14" class="t" style="left:1736.0px;top:543.0px;font-size:13.5px;color:#c4c6cc;letter-spacing:-0.174px;transform:translateY(-50%);-webkit-text-stroke:0.25px;">64,000.00</span>
<span id="t15" class="t" style="left:1736.0px;top:580.4px;font-size:13.5px;color:#c4c6cc;letter-spacing:-0.174px;transform:translateY(-50%);-webkit-text-stroke:0.25px;">60,000.00</span>
<span id="t16" class="t" style="left:1736.0px;top:617.7px;font-size:13.5px;color:#c4c6cc;letter-spacing:-0.174px;transform:translateY(-50%);-webkit-text-stroke:0.25px;">56,000.00</span>
<span id="t17" class="t" style="left:1736.0px;top:655.0px;font-size:13.5px;color:#c4c6cc;letter-spacing:-0.174px;transform:translateY(-50%);-webkit-text-stroke:0.25px;">52,000.00</span>
<span id="t18" class="t" style="left:1736.0px;top:692.4px;font-size:13.5px;color:#c4c6cc;letter-spacing:-0.174px;transform:translateY(-50%);-webkit-text-stroke:0.25px;">48,000.00</span>
<span id="t19" class="t" style="left:1736.0px;top:729.7px;font-size:13.5px;color:#c4c6cc;letter-spacing:-0.174px;transform:translateY(-50%);-webkit-text-stroke:0.25px;">44,000.00</span>
<span id="t20" class="t" style="left:1736.0px;top:797.8px;font-size:13.5px;color:#c4c6cc;letter-spacing:-0.259px;transform:translateY(-50%);-webkit-text-stroke:0.25px;">80.00</span>
<span id="t21" class="t" style="left:1736.0px;top:855.8px;font-size:13.5px;color:#c4c6cc;letter-spacing:-0.259px;transform:translateY(-50%);-webkit-text-stroke:0.25px;">60.00</span>
<span id="t22" class="t" style="left:1736.0px;top:913.8px;font-size:13.5px;color:#c4c6cc;letter-spacing:-0.259px;transform:translateY(-50%);-webkit-text-stroke:0.25px;">40.00</span>
<span id="t23" class="t" style="left:1736.0px;top:971.8px;font-size:13.5px;color:#c4c6cc;letter-spacing:-0.259px;transform:translateY(-50%);-webkit-text-stroke:0.25px;">20.00</span>
<div class="lab" style="left:1727.0px;top:171.0px;width:81.0px;height:19.2px;background:#fbdd3c"></div>
<div class="lab" style="left:1727.0px;top:226.0px;width:73.0px;height:34.0px;background:#0f9b84"></div>
<div class="lab" style="left:1727.0px;top:259.5px;width:73.0px;height:18.5px;background:#fbdd3c"></div>
<div class="lab" style="left:1727.0px;top:278.5px;width:73.0px;height:18.5px;background:#fbdd3c"></div>
<div class="lab" style="left:1727.0px;top:297.0px;width:73.0px;height:19.0px;background:#fbdd3c"></div>
<div class="lab" style="left:1727.0px;top:508.0px;width:73.0px;height:19.0px;background:#fbdd3c"></div>
<div class="lab" style="left:1727.0px;top:868.0px;width:48.0px;height:18.5px;background:#7e57c2"></div>
<div class="lab" style="left:1727.0px;top:886.5px;width:48.0px;height:18.5px;background:#fbdd3c"></div>
<svg id="icons" width="1813" height="1080" viewBox="0 0 1813 1080" style="position:absolute;left:0;top:0" fill="none" stroke="#d8d8d8" stroke-width="1.4" stroke-linecap="round" stroke-linejoin="round">
<!-- search -->
<circle cx="22.3" cy="21.8" r="5.9" stroke="#e6e6e6" stroke-width="1.5"/><path d="M26.6 26.2L31 30.5" stroke="#e6e6e6" stroke-width="1.5"/>
<!-- plus circle -->
<circle cx="132" cy="22.5" r="9.8" stroke-width="1.3"/><path d="M127 22.5H137M132 17.5V27.5" stroke-width="1.3"/>
<!-- separators -->
<path d="M159.8 10.5V34.5M507.5 10.5V34.5M558.5 10.5V34.5M688.5 10.5V34.5M897 10.5V34.5" stroke="#3c3c3c" stroke-width="1.2"/>
<!-- chevron -->
<path d="M487.6 20.7L491.4 24.5L495.2 20.7" stroke-width="1.4"/>
<!-- candles icon -->
<rect x="526.8" y="15.5" width="4.6" height="14" rx="0.8"/><path d="M529.1 11.5V15.5M529.1 29.5V33"/>
<rect x="536.5" y="18.6" width="4.4" height="7.6" rx="0.8"/><path d="M538.7 15V18.6M538.7 26.2V29.8"/>
<!-- indicators -->
<path d="M576.4 31.4V28H581V25.6H585.6V23.2H590.1V21H594.6V31.4Z M581 28V31.4M585.6 25.6V31.4M590.1 23.2V31.4" stroke-width="1.3"/>
<path d="M576.5 19.5L582.6 14.8L587 18.3L594.5 12.6"/>
<!-- grid -->
<rect x="653.8" y="14.2" width="7.4" height="7.4" rx="1.8"/><rect x="663.9" y="14.2" width="7.4" height="7.4" rx="1.8"/>
<rect x="653.8" y="24.2" width="7.4" height="7.4" rx="1.8"/><rect x="663.9" y="24.2" width="7.4" height="7.4" rx="1.8"/>
<!-- alert -->
<path d="M721.9 25A9.1 9.1 0 1 0 716 30.9"/><path d="M713.5 17V22.6H709.5"/><path d="M716.3 30.2H725M720.6 25.8V34.6"/>
<path d="M704 15.2Q705.5 12.8 708 11.6M718.4 11.6Q721 12.8 722.6 15.4"/>
<!-- replay -->
<path d="M798.6 22.8L805.9 17.2V28.6Z M807.4 22.8L814.6 17.2V28.6Z" stroke-width="1.3"/>
<!-- undo / redo -->
<path d="M919.4 16.2L915 20.6L919.4 25M915.2 20.6H924Q929 20.6 929 25.6V28"/>
<path d="M966.2 16.2L970.6 20.6L966.2 25M970.4 20.6H961.6Q956.6 20.6 956.6 25.6V28" stroke="#4a4a4a"/>
<!-- top-right box -->
<rect x="1802.3" y="14" width="16" height="17.6" rx="3" stroke="#d0d0d0" stroke-width="1.5"/>
<!-- collapse chevron -->
<path d="M27.2 194.4L31.7 190.1L36.2 194.4" stroke-width="1.7"/>
<!-- eye-off icons -->
<g stroke="#cdcdcd" stroke-width="1.45"><path d="M92.4 139.4C96 131 106.5 131 110.2 139.4C106.5 147.8 96 147.8 92.4 139.4Z"/><circle cx="101.3" cy="139.4" r="3"/><path d="M95 145.6L107.6 132.8"/></g>
<g stroke="#cdcdcd" stroke-width="1.45" transform="translate(16.6 26.2)"><path d="M92.4 139.4C96 131 106.5 131 110.2 139.4C106.5 147.8 96 147.8 92.4 139.4Z"/><circle cx="101.3" cy="139.4" r="3"/><path d="M95 145.6L107.6 132.8"/></g>
<!-- live dot -->
<circle cx="347" cy="67" r="8.2" fill="#12332d" stroke="none"/><circle cx="347" cy="67" r="4.4" fill="#24b39b" stroke="none"/>
<!-- coin icons -->
<circle cx="30.4" cy="62.8" r="6.7" fill="#2a9d95" stroke="none"/><path d="M27 61.2H33.8L30.4 66.2ZM28.4 59.6H32.4" stroke="#bff4ee" stroke-width="1.1"/>
<circle cx="23.7" cy="69.4" r="7.6" fill="#0f0f0f" stroke="none"/><circle cx="23.7" cy="69.4" r="6.6" fill="#f09c32" stroke="none"/>
<text x="23.8" y="72.4" font-family="Liberation Sans, sans-serif" font-weight="700" font-size="8.6" text-anchor="middle" fill="#fff1d8" stroke="none">B</text>
<!-- top right buttons -->
<path d="M1678.2 60.8V70.4M1674.4 66.8L1678.2 70.6L1682 66.8" stroke-width="1.4"/>
<path d="M1703.2 63.8V62.4Q1703.2 60 1705.6 60H1712.4Q1714.8 60 1714.8 62.4V63.8M1703.2 67.6V69Q1703.2 71.4 1705.6 71.4H1712.4Q1714.8 71.4 1714.8 69V67.6" stroke-width="1.4"/>
<!-- rsi legend null icons -->
<g stroke="#e0e0e0" stroke-width="1.4"><circle cx="191.5" cy="760" r="4.4"/><path d="M188 764.4L195 755.6"/><circle cx="212.5" cy="760" r="4.4"/><path d="M209 764.4L216 755.6"/></g>
<!-- bottom bar -->
<path d="M350 1049V1073" stroke="#3c3c3c" stroke-width="1.2"/>
<path d="M368.5 1061V1055.5Q368.5 1053.5 370.5 1053.5H384Q386 1053.5 386 1055.5V1067.5Q386 1069.5 384 1069.5H378M372.5 1050.5V1056M382 1050.5V1056M366.5 1067.5H374.5M371.8 1064.3L375 1067.5L371.8 1070.7" stroke-width="1.3"/>
<!-- settings hex -->
<path d="M1764.8 1018.2H1772.8L1776.8 1025L1772.8 1031.8H1764.8L1760.8 1025Z" stroke-width="1.3"/><circle cx="1768.8" cy="1025" r="2.3" stroke-width="1.3"/>
<!-- TradingView logo mark -->
<g fill="#ececec" stroke="none"><path d="M19.9 978.5H35V994.3H27.4V985.8H19.9Z"/><circle cx="39.1" cy="981.2" r="2.9"/><path d="M43.4 978.5H52.3L46.3 994.3H37.6Z"/></g>
<!-- drawing toolbar icons -->
<g fill="#4a4a4a" stroke="none"><circle cx="845" cy="69" r="1.1"/><circle cx="851" cy="69" r="1.1"/><circle cx="845" cy="74.5" r="1.1"/><circle cx="851" cy="74.5" r="1.1"/><circle cx="845" cy="80" r="1.1"/><circle cx="851" cy="80" r="1.1"/></g>
<g stroke="#cfcfcf" stroke-width="1.25">
<path d="M871 75H879.8M885 75H894"/><circle cx="882.4" cy="75" r="2.5"/>
<path d="M916 81.6L931 66.8"/><circle cx="914.2" cy="83.4" r="2.4"/><circle cx="932.8" cy="65" r="2.4"/>
<path d="M953.5 63.5H976M953.5 70.2H974.6M953.5 76.8H978M956.8 83.6H978"/><circle cx="977.2" cy="70.2" r="2.4"/><circle cx="954.2" cy="83.6" r="2.4"/>
<path d="M998.6 68L1010 64.6M996.4 71.5V74M998.8 76.6H1020.5M996 81.4H1020.5M996 86H1020.5"/><circle cx="996.4" cy="69" r="2.4"/><circle cx="1012.4" cy="64" r="2.4"/><circle cx="996.4" cy="76.6" r="2.4"/>
<path d="M1039.4 79.2L1043.6 74.4M1047.3 74.6L1051.3 79.2M1054.8 79.2L1059.6 74.4"/><circle cx="1037.7" cy="81" r="2.3"/><circle cx="1045.4" cy="72.6" r="2.3"/><circle cx="1053" cy="81" r="2.3"/><circle cx="1061.4" cy="72.6" r="2.3"/>
<path d="M1080.6 79.2L1084.8 74.4M1088.5 74.6L1092.5 79.2M1096 79.2L1100.8 74.4"/><circle cx="1078.9" cy="81" r="2.3"/><circle cx="1086.6" cy="72.6" r="2.3"/><circle cx="1094.2" cy="81" r="2.3"/><circle cx="1102.6" cy="72.6" r="2.3"/>
<path d="M1124.8 66H1143.6M1124.8 77H1139.4M1124.8 83.6H1143.6"/><circle cx="1122.4" cy="66" r="2.3"/><circle cx="1122.4" cy="77" r="2.3"/><circle cx="1122.4" cy="83.6" r="2.3"/><circle cx="1141.8" cy="77" r="2.3"/><path d="M1128 74.6L1142 68.4" stroke-dasharray="1.6 2"/>
<path d="M1166.2 66H1185M1166.2 72.6H1180.8M1166.2 83.6H1185"/><circle cx="1163.8" cy="66" r="2.3"/><circle cx="1163.8" cy="72.6" r="2.3"/><circle cx="1163.8" cy="83.6" r="2.3"/><circle cx="1183.2" cy="72.6" r="2.3"/><path d="M1169.4 75.4L1183.4 81.4" stroke-dasharray="1.6 2"/>
<path d="M1209.2 65.2H1223.6M1209.2 83.6H1223.6M1206.8 67.6V81.2M1226 67.6V81.2"/><circle cx="1206.8" cy="65.2" r="2.4"/><circle cx="1226" cy="65.2" r="2.4"/><circle cx="1206.8" cy="83.6" r="2.4"/><circle cx="1226" cy="83.6" r="2.4"/>
<text x="1258.5" y="83.9" font-family="DejaVu Sans, Liberation Sans, sans-serif" font-weight="200" font-size="25.6" text-anchor="middle" fill="#cfcfcf" stroke="none" transform="translate(1258.5 0) scale(1.08 1) translate(-1258.5 0)">T</text>
<path d="M1250.3 68.2V65.3M1266.7 68.2V65.3M1255.4 83.6H1261.6" stroke-linecap="butt"/>
<text x="1300.9" y="83.9" font-family="DejaVu Sans, Liberation Sans, sans-serif" font-weight="200" font-size="25.6" text-anchor="middle" fill="#cfcfcf" stroke="none" transform="translate(1300.9 0) scale(1.08 1) translate(-1300.9 0)">T</text>
<path d="M1292.7 68.2V65.3M1309.1 68.2V65.3M1297.8 83.6H1304" stroke-linecap="butt"/>
<path d="M1312.4 78.6V86.2M1310.4 80.6H1314.4M1309 83.6Q1309.4 86.2 1312.4 86.2Q1315.4 86.2 1315.8 83.6" stroke-width="1.1"/><circle cx="1312.4" cy="77.4" r="1.1" stroke-width="1"/>
</g>
<g id="mini" fill="#cfcfcf" stroke="none" font-family="Liberation Sans, sans-serif" font-weight="700" font-size="7.6" text-anchor="middle"><text x="1045.2" y="66.6">1</text><text x="1061.6" y="66.6">5</text><text x="1086.6" y="66.6">A</text><text x="1102.6" y="66.6">C</text></g>
</svg>

<span id="t24" class="t" style="left:1736.0px;top:180.8px;font-size:13.4px;color:#141414;letter-spacing:-0.203px;transform:translateY(-50%);">102,880.98</span>
<span id="t25" class="t" style="left:1736.0px;top:235.0px;font-size:13.2px;color:#fff;font-weight:700;letter-spacing:-0.019px;transform:translateY(-50%);">97,077.16</span>
<span id="t26" class="t" style="left:1736.0px;top:250.5px;font-size:13.2px;color:#d6f3ec;letter-spacing:-0.203px;transform:translateY(-50%);-webkit-text-stroke:0.3px;">47:50</span>
<span id="t27" class="t" style="left:1736.0px;top:269.0px;font-size:13.2px;color:#141414;letter-spacing:-0.019px;transform:translateY(-50%);">94,529.06</span>
<span id="t28" class="t" style="left:1736.0px;top:288.0px;font-size:13.2px;color:#141414;letter-spacing:-0.019px;transform:translateY(-50%);">92,093.77</span>
<span id="t29" class="t" style="left:1736.0px;top:306.5px;font-size:13.2px;color:#141414;letter-spacing:-0.019px;transform:translateY(-50%);">90,765.43</span>
<span id="t30" class="t" style="left:1736.0px;top:517.5px;font-size:13.2px;color:#141414;letter-spacing:-0.019px;transform:translateY(-50%);">66,855.33</span>
<span id="t31" class="t" style="left:1736.0px;top:877.5px;font-size:13.2px;color:#fff;letter-spacing:-0.103px;transform:translateY(-50%);">52.56</span>
<span id="t32" class="t" style="left:1736.0px;top:896.0px;font-size:13.2px;color:#141414;letter-spacing:-0.103px;transform:translateY(-50%);">48.67</span>
<span id="t33" class="t" style="left:72.0px;top:1025.5px;font-size:13.5px;color:#c4c6cc;transform:translate(-50%,-50%);-webkit-text-stroke:0.25px;">8월</span>
<span id="t34" class="t" style="left:199.0px;top:1025.5px;font-size:13.5px;color:#c4c6cc;transform:translate(-50%,-50%);-webkit-text-stroke:0.25px;">19</span>
<span id="t35" class="t" style="left:289.0px;top:1025.5px;font-size:13.5px;color:#c4c6cc;transform:translate(-50%,-50%);-webkit-text-stroke:0.25px;">9월</span>
<span id="t36" class="t" style="left:394.0px;top:1025.5px;font-size:13.5px;color:#c4c6cc;transform:translate(-50%,-50%);-webkit-text-stroke:0.25px;">16</span>
<span id="t37" class="t" style="left:499.0px;top:1025.5px;font-size:13.5px;color:#c4c6cc;transform:translate(-50%,-50%);-webkit-text-stroke:0.25px;">10월</span>
<span id="t38" class="t" style="left:591.0px;top:1025.5px;font-size:13.5px;color:#c4c6cc;transform:translate(-50%,-50%);-webkit-text-stroke:0.25px;">14</span>
<span id="t39" class="t" style="left:716.0px;top:1025.5px;font-size:13.5px;color:#c4c6cc;transform:translate(-50%,-50%);-webkit-text-stroke:0.25px;">11월</span>
<span id="t40" class="t" style="left:835.0px;top:1025.5px;font-size:13.5px;color:#c4c6cc;transform:translate(-50%,-50%);-webkit-text-stroke:0.25px;">18</span>
<span id="t41" class="t" style="left:926.0px;top:1025.5px;font-size:13.5px;color:#c4c6cc;transform:translate(-50%,-50%);-webkit-text-stroke:0.25px;">12월</span>
<span id="t42" class="t" style="left:1031.0px;top:1025.5px;font-size:13.5px;color:#c4c6cc;transform:translate(-50%,-50%);-webkit-text-stroke:0.25px;">16</span>
<span id="t43" class="t" style="left:1143.0px;top:1025.5px;font-size:13.5px;color:#c4c6cc;font-weight:700;transform:translate(-50%,-50%);-webkit-text-stroke:0.25px;">2025</span>
<span id="t44" class="t" style="left:1235.0px;top:1025.5px;font-size:13.5px;color:#c4c6cc;transform:translate(-50%,-50%);-webkit-text-stroke:0.25px;">14</span>
<span id="t45" class="t" style="left:1359.0px;top:1025.5px;font-size:13.5px;color:#c4c6cc;transform:translate(-50%,-50%);-webkit-text-stroke:0.25px;">2월</span>
<span id="t46" class="t" style="left:1451.0px;top:1025.5px;font-size:13.5px;color:#c4c6cc;transform:translate(-50%,-50%);-webkit-text-stroke:0.25px;">14</span>
<span id="t47" class="t" style="left:1556.0px;top:1025.5px;font-size:13.5px;color:#c4c6cc;transform:translate(-50%,-50%);-webkit-text-stroke:0.25px;">3월</span>
<span id="t48" class="t" style="left:1668.0px;top:1025.5px;font-size:13.5px;color:#c4c6cc;transform:translate(-50%,-50%);-webkit-text-stroke:0.25px;">17</span>
<span id="t49" class="t" style="left:22.5px;top:1062.0px;font-size:15.5px;color:#dcdcdc;font-weight:500;letter-spacing:-0.945px;transform:translateY(-50%);-webkit-text-stroke:0.3px;">1일</span>
<span id="t50" class="t" style="left:58.0px;top:1062.0px;font-size:15.5px;color:#dcdcdc;font-weight:500;letter-spacing:-0.945px;transform:translateY(-50%);-webkit-text-stroke:0.3px;">5날</span>
<span id="t51" class="t" style="left:93.0px;top:1062.0px;font-size:15.5px;color:#dcdcdc;font-weight:500;letter-spacing:-0.945px;transform:translateY(-50%);-webkit-text-stroke:0.3px;">1달</span>
<span id="t52" class="t" style="left:128.7px;top:1062.0px;font-size:15.5px;color:#dcdcdc;font-weight:500;letter-spacing:-0.795px;transform:translateY(-50%);-webkit-text-stroke:0.3px;">3달</span>
<span id="t53" class="t" style="left:164.0px;top:1062.0px;font-size:15.5px;color:#dcdcdc;font-weight:500;letter-spacing:-0.945px;transform:translateY(-50%);-webkit-text-stroke:0.3px;">6달</span>
<span id="t54" class="t" style="left:200.0px;top:1061.3px;font-size:15.5px;color:#dcdcdc;font-weight:500;letter-spacing:-1.667px;transform:translateY(-50%);-webkit-text-stroke:0.3px;">YTD</span>
<span id="t55" class="t" style="left:240.0px;top:1062.0px;font-size:15.5px;color:#dcdcdc;font-weight:500;letter-spacing:-0.945px;transform:translateY(-50%);-webkit-text-stroke:0.3px;">1해</span>
<span id="t56" class="t" style="left:275.0px;top:1062.0px;font-size:15.5px;color:#dcdcdc;font-weight:500;letter-spacing:-0.945px;transform:translateY(-50%);-webkit-text-stroke:0.3px;">5해</span>
<span id="t57" class="t" style="left:311.0px;top:1062.0px;font-size:15.5px;color:#dcdcdc;font-weight:500;letter-spacing:-0.766px;transform:translateY(-50%);-webkit-text-stroke:0.3px;">전체</span>
<span id="t58" class="t" style="left:1692.5px;top:1061.2px;font-size:16.2px;color:#dcdcdc;transform:translateY(-50%) scaleX(0.9100);-webkit-text-stroke:0.3px;transform-origin:left center;">20:12:09 UTC+9</span>
<span id="t59" class="t" style="left:36.0px;top:22.6px;font-size:16.4px;color:#f0f0f0;font-weight:700;transform:translateY(-50%) scaleX(0.8300);transform-origin:left center;">BTCUSDT</span>
<span id="t60" class="t" style="left:173.0px;top:23.3px;font-size:15.5px;color:#dedede;font-weight:500;letter-spacing:-0.445px;transform:translateY(-50%);-webkit-text-stroke:0.3px;">1분</span>
<span id="t61" class="t" style="left:208.0px;top:23.3px;font-size:15.5px;color:#dedede;font-weight:500;letter-spacing:0.055px;transform:translateY(-50%);-webkit-text-stroke:0.3px;">5분</span>
<span id="t62" class="t" style="left:244.0px;top:23.3px;font-size:15.5px;color:#dedede;font-weight:500;letter-spacing:-0.505px;transform:translateY(-50%);-webkit-text-stroke:0.3px;">15분</span>
<span id="t63" class="t" style="left:287.0px;top:23.3px;font-size:15.5px;color:#dedede;font-weight:500;letter-spacing:-0.505px;transform:translateY(-50%);-webkit-text-stroke:0.3px;">30분</span>
<span id="t64" class="t" style="left:331.0px;top:23.3px;font-size:15.5px;color:#dedede;font-weight:500;letter-spacing:-0.380px;transform:translateY(-50%);-webkit-text-stroke:0.3px;">1시간</span>
<span id="t65" class="t" style="left:380.0px;top:23.3px;font-size:15.5px;color:#3b6ef5;font-weight:500;letter-spacing:-0.214px;transform:translateY(-50%);-webkit-text-stroke:0.3px;">4시간</span>
<span id="t66" class="t" style="left:430.5px;top:23.3px;font-size:15.5px;color:#dedede;font-weight:500;letter-spacing:-0.766px;transform:translateY(-50%);-webkit-text-stroke:0.3px;">날</span>
<span id="t67" class="t" style="left:458.0px;top:23.3px;font-size:15.5px;color:#dedede;font-weight:500;letter-spacing:-0.266px;transform:translateY(-50%);-webkit-text-stroke:0.3px;">주</span>
<span id="t68" class="t" style="left:603.0px;top:23.3px;font-size:15.5px;color:#dedede;font-weight:500;letter-spacing:-0.266px;transform:translateY(-50%);-webkit-text-stroke:0.3px;">지표</span>
<span id="t69" class="t" style="left:732.0px;top:23.3px;font-size:15.5px;color:#dedede;font-weight:500;letter-spacing:-0.260px;transform:translateY(-50%);-webkit-text-stroke:0.3px;">얼러트</span>
<span id="t70" class="t" style="left:824.5px;top:23.3px;font-size:15.5px;color:#dedede;font-weight:500;letter-spacing:-0.512px;transform:translateY(-50%);-webkit-text-stroke:0.3px;">리플레이</span>
<span id="t71" class="t" style="left:40.9px;top:66.9px;font-size:17.2px;color:#ededed;letter-spacing:0.301px;transform:translateY(-50%);-webkit-text-stroke:0.35px #ededed;">Bitcoin</span>
<span id="t72" class="t" style="left:101.9px;top:66.9px;font-size:17.2px;color:#ededed;transform:translateY(-50%);-webkit-text-stroke:0.35px #ededed;">/</span>
<span id="t73" class="t" style="left:116.5px;top:66.9px;font-size:17.2px;color:#ededed;transform:translateY(-50%) scaleX(0.9518);-webkit-text-stroke:0.35px #ededed;transform-origin:left center;">TetherUS</span>
<span id="t74" class="t" style="left:190.6px;top:66.9px;font-size:17.2px;color:#ededed;transform:translate(-50%,-50%);-webkit-text-stroke:0.35px #ededed;">·</span>
<span id="t75" class="t" style="left:198.4px;top:67.5px;font-size:17.2px;color:#ededed;font-weight:500;letter-spacing:-0.396px;transform:translateY(-50%);-webkit-text-stroke:0.35px #ededed;">4시간</span>
<span id="t76" class="t" style="left:246.2px;top:66.9px;font-size:17.2px;color:#ededed;transform:translate(-50%,-50%);-webkit-text-stroke:0.35px #ededed;">·</span>
<span id="t77" class="t" style="left:253.5px;top:66.9px;font-size:17.2px;color:#ededed;transform:translateY(-50%) scaleX(0.8743);-webkit-text-stroke:0.35px #ededed;transform-origin:left center;">BINANCE</span>
<span id="t78" class="t" style="left:376.0px;top:67.5px;font-size:14.0px;color:#d8d8d8;font-weight:500;letter-spacing:-0.891px;transform:translateY(-50%);">시</span>
<span id="t79" class="t" style="left:389.0px;top:67.5px;font-size:14.3px;color:#26a28a;letter-spacing:-0.068px;transform:translateY(-50%);">96,944.09</span>
<span id="t80" class="t" style="left:460.0px;top:67.5px;font-size:14.0px;color:#d8d8d8;font-weight:500;letter-spacing:-0.891px;transform:translateY(-50%);">고</span>
<span id="t81" class="t" style="left:473.5px;top:67.5px;font-size:14.3px;color:#26a28a;letter-spacing:-0.123px;transform:translateY(-50%);">97,196.00</span>
<span id="t82" class="t" style="left:543.0px;top:67.5px;font-size:14.0px;color:#d8d8d8;font-weight:500;letter-spacing:-0.891px;transform:translateY(-50%);">저</span>
<span id="t83" class="t" style="left:556.5px;top:67.5px;font-size:14.3px;color:#26a28a;letter-spacing:-0.068px;transform:translateY(-50%);">96,799.99</span>
<span id="t84" class="t" style="left:627.0px;top:67.5px;font-size:14.0px;color:#d8d8d8;font-weight:500;letter-spacing:-0.891px;transform:translateY(-50%);">종</span>
<span id="t85" class="t" style="left:640.5px;top:67.5px;font-size:14.3px;color:#26a28a;letter-spacing:-0.068px;transform:translateY(-50%);">97,077.16</span>
<span id="t86" class="t" style="left:711.0px;top:67.5px;font-size:14.3px;color:#26a28a;letter-spacing:-0.404px;transform:translateY(-50%);">+133.07 (+0.14%)</span>
<span id="t87" class="t" style="left:59.5px;top:97.0px;font-size:13.5px;color:#f0414f;font-weight:700;letter-spacing:0.438px;transform:translate(-50%,-50%);">97,077.16</span>
<span id="t88" class="t" style="left:59.5px;top:111.5px;font-size:12.0px;color:#f0414f;font-weight:700;transform:translate(-50%,-50%);">셀</span>
<span id="t89" class="t" style="left:112.0px;top:102.5px;font-size:11.5px;color:#e0e0e0;font-weight:700;letter-spacing:-0.223px;transform:translateY(-50%);">0.01</span>
<span id="t90" class="t" style="left:186.0px;top:97.0px;font-size:13.5px;color:#3b6ef5;font-weight:700;letter-spacing:0.438px;transform:translate(-50%,-50%);">97,077.17</span>
<span id="t91" class="t" style="left:185.5px;top:111.5px;font-size:12.0px;color:#3b6ef5;font-weight:700;letter-spacing:-0.047px;transform:translate(-50%,-50%);">바이</span>
<span id="t92" class="t" style="left:17.0px;top:140.6px;font-size:14.0px;color:#656565;letter-spacing:-0.275px;transform:translateY(-50%);">볼륨 · BTC</span>
<span id="t93" class="t" style="left:16.7px;top:166.2px;font-size:14.0px;color:#656565;letter-spacing:-0.384px;transform:translateY(-50%);">SMA 20 close</span>
<span id="t94" class="t" style="left:16.0px;top:760.0px;font-size:13.5px;color:#e8e8e8;letter-spacing:-1.172px;transform:translateY(-50%);">RSI</span>
<span id="t95" class="t" style="left:40.0px;top:760.0px;font-size:13.5px;color:#8a8d96;letter-spacing:0.088px;transform:translateY(-50%);">14 close</span>
<span id="t96" class="t" style="left:101.0px;top:760.0px;font-size:13.5px;color:#7a62cc;letter-spacing:0.041px;transform:translateY(-50%);">52.56</span>
<span id="t97" class="t" style="left:142.0px;top:760.0px;font-size:13.5px;color:#f5cf48;font-weight:700;letter-spacing:0.241px;transform:translateY(-50%);">48.67</span>
<span id="t98" class="t" style="left:859.0px;top:799.6px;font-size:16.4px;color:#f4f4f4;font-weight:500;letter-spacing:1.008px;transform:translateY(-50%);">과매수 국면</span>
<span id="t99" class="t" style="left:60.5px;top:987.0px;font-size:20.6px;color:#ececec;font-weight:700;transform:translateY(-50%) scaleX(1.0956);transform-origin:left center;">TradingView</span>
</body></html>
